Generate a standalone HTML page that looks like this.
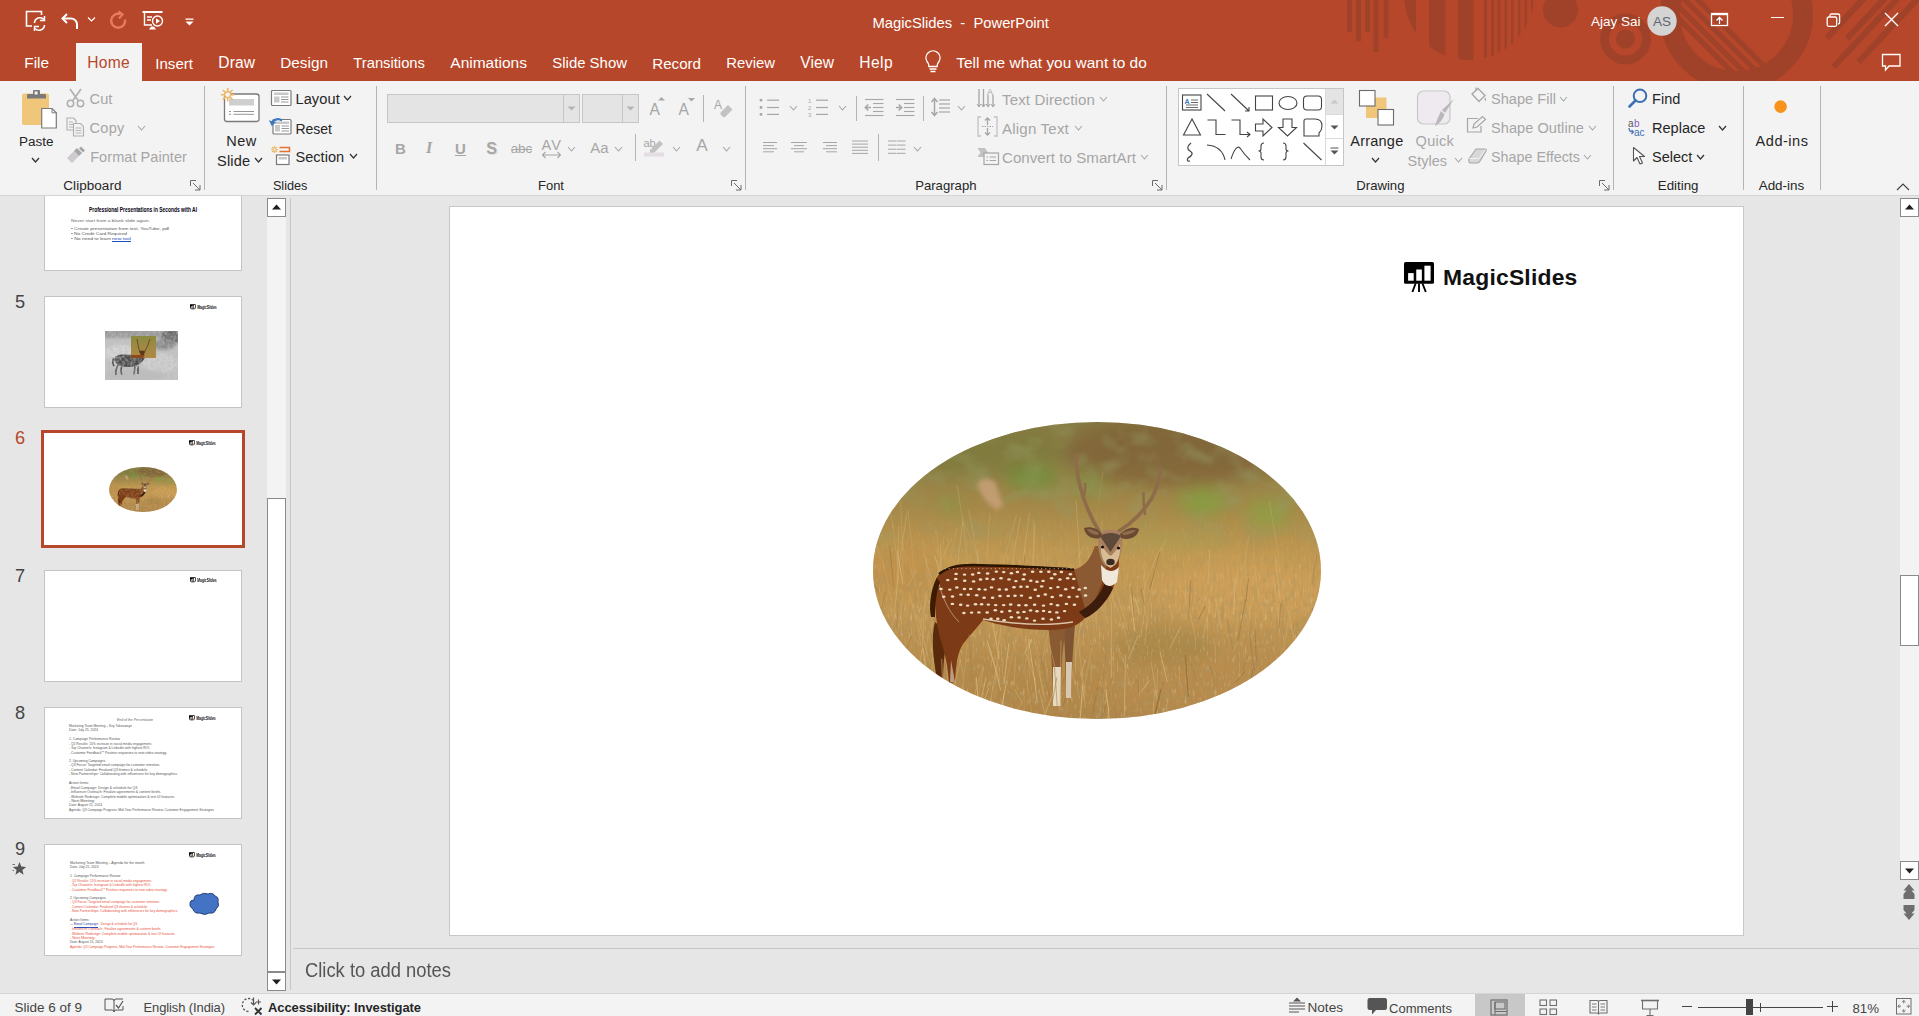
<!DOCTYPE html>
<html><head><meta charset="utf-8"><title>MagicSlides - PowerPoint</title>
<style>
html,body{margin:0;padding:0;width:1919px;height:1016px;overflow:hidden;background:#E6E6E6;font-family:"Liberation Sans",sans-serif;}
.a{position:absolute;}
.t{position:absolute;white-space:pre;}
svg.a{overflow:visible;}
</style></head><body>
<div class="a" style="left:0px;top:0px;width:1919px;height:81px;background:#B7472A"></div>
<div class="a" style="left:0px;top:81px;width:1919px;height:114px;background:#F3F3F3"></div>
<div class="a" style="left:0px;top:195px;width:1919px;height:1px;background:#D5D5D5"></div>
<div class="a" style="left:76px;top:43px;width:66px;height:38px;background:#F3F3F3"></div>
<div class="a" style="left:204px;top:86px;width:1px;height:104px;background:#B4B4B4"></div>
<div class="a" style="left:376px;top:86px;width:1px;height:104px;background:#B4B4B4"></div>
<div class="a" style="left:745px;top:86px;width:1px;height:104px;background:#B4B4B4"></div>
<div class="a" style="left:1166px;top:86px;width:1px;height:104px;background:#B4B4B4"></div>
<div class="a" style="left:1613px;top:86px;width:1px;height:104px;background:#B4B4B4"></div>
<div class="a" style="left:1743px;top:86px;width:1px;height:104px;background:#B4B4B4"></div>
<div class="a" style="left:1820px;top:86px;width:1px;height:104px;background:#B4B4B4"></div>
<svg class="a" style="left:20px;top:88px;" width="40" height="42" viewBox="0 0 40 42"><rect x="2" y="5.5" width="27" height="31.5" rx="2" fill="#EFC67A"/>
<path d="M7 10.5 V7 Q7 6 8 6 H13 V3 Q13 2 14 2 H19 Q20 2 20 3 V6 H25 Q26 6 26 7 V10.5 Z" fill="#7A7A7A"/>
<rect x="14.6" y="3.5" width="3" height="3" fill="#F3F3F3"/>
<path d="M21.7 20.5 H32 L36.3 24.8 V40 H21.7 Z" fill="#FFFFFF" stroke="#7A7A7A" stroke-width="1.2"/>
<path d="M32 20.5 V24.8 H36.3" fill="none" stroke="#7A7A7A" stroke-width="1"/></svg>
<div class="t" style="left:19px;top:135.00px;font-size:13.49px;line-height:13.49px;color:#262626;">Paste</div>
<svg class="a" style="left:31px;top:157px;" width="9" height="6" viewBox="0 0 9 6"><path d="M1 1 L4.5 5 L8 1" fill="none" stroke="#333" stroke-width="1.3"/></svg>
<svg class="a" style="left:66px;top:88px;" width="19" height="20" viewBox="0 0 19 20"><path d="M4 1 L12.5 13 M15 1 L6.5 13" stroke="#AFAFAF" stroke-width="1.6" fill="none"/><circle cx="4.5" cy="15.5" r="3.2" fill="none" stroke="#AFAFAF" stroke-width="1.5"/><circle cx="14.5" cy="15.5" r="3.2" fill="none" stroke="#AFAFAF" stroke-width="1.5"/></svg>
<div class="t" style="left:89.6px;top:92.00px;font-size:14.56px;line-height:14.56px;color:#A6A6A6;letter-spacing:0.08px;">Cut</div>
<svg class="a" style="left:66px;top:117px;" width="20" height="20" viewBox="0 0 20 20"><path d="M1 1 H7.5 L10 3.5 V13 H1 Z" fill="none" stroke="#AFAFAF" stroke-width="1.1"/><path d="M3 5 H7 M3 7.5 H8 M3 10 H8" stroke="#AFAFAF" stroke-width="0.9"/><path d="M7.5 6.5 H14.5 L17.5 9.5 V19 H7.5 Z" fill="#F3F3F3" stroke="#AFAFAF" stroke-width="1.1"/><path d="M9.5 11 H15.5 M9.5 13.5 H15.5 M9.5 16 H15.5" stroke="#AFAFAF" stroke-width="0.9"/></svg>
<div class="t" style="left:89.6px;top:121.00px;font-size:14.56px;line-height:14.56px;color:#A6A6A6;letter-spacing:0.23px;">Copy</div>
<svg class="a" style="left:137px;top:125px;" width="9" height="6" viewBox="0 0 9 6"><path d="M1 1 L4.5 5 L8 1" fill="none" stroke="#A6A6A6" stroke-width="1.1"/></svg>
<svg class="a" style="left:66px;top:147px;" width="20" height="17" viewBox="0 0 20 17"><path d="M1 11 L8 4 L13 9 L6 16 Z" fill="#CFCACF"/><path d="M8 4 L11 1 L16 6 L13 9 Z" fill="#A6A6A6"/><path d="M13 1.5 L15 -0.5 L19 3.5 L17 5.5 Z" fill="#A6A6A6"/></svg>
<div class="t" style="left:90.2px;top:150.00px;font-size:14.56px;line-height:14.56px;color:#A6A6A6;letter-spacing:0.04px;">Format Painter</div>
<div class="t" style="left:63.3px;top:179.00px;font-size:13.52px;line-height:13.52px;color:#262626;letter-spacing:0.04px;">Clipboard</div>
<svg class="a" style="left:190px;top:180px;" width="11" height="11" viewBox="0 0 11 11"><path d="M0.5 6 V0.5 H6" fill="none" stroke="#6b6b6b" stroke-width="1"/><path d="M3 3 L10 10 M10 5 V10 H5" fill="none" stroke="#6b6b6b" stroke-width="1"/></svg>
<svg class="a" style="left:218px;top:86px;" width="44" height="38" viewBox="0 0 44 38"><rect x="6.5" y="8" width="34.5" height="27.5" rx="2.5" fill="#FFFFFF" stroke="#7A7A7A" stroke-width="1.3"/>
<rect x="11" y="13" width="25" height="6.5" fill="#CFCFCF"/>
<path d="M11 25.5 H13 M15.5 25.5 H36 M11 28.3 H13 M15.5 28.3 H36" stroke="#8A8A8A" stroke-width="0.9"/>
<g stroke="#EDB867" stroke-width="1.6"><path d="M9.7 2 V15.6 M2.9 8.8 H16.5 M4.9 4 L14.5 13.6 M14.5 4 L4.9 13.6"/></g>
<circle cx="9.7" cy="8.8" r="3" fill="#F3F3F3" stroke="#EDB867" stroke-width="1.4"/></svg>
<div class="t" style="left:226.3px;top:134.00px;font-size:14.56px;line-height:14.56px;color:#262626;letter-spacing:0.46px;">New</div>
<div class="t" style="left:217.1px;top:154.00px;font-size:14.56px;line-height:14.56px;color:#262626;letter-spacing:0.16px;">Slide</div>
<svg class="a" style="left:254px;top:157px;" width="9" height="6" viewBox="0 0 9 6"><path d="M1 1 L4.5 5 L8 1" fill="none" stroke="#333" stroke-width="1.2"/></svg>
<svg class="a" style="left:270px;top:89px;" width="23" height="18" viewBox="0 0 23 18"><rect x="1.5" y="1.5" width="19.5" height="15" rx="1" fill="#FFFFFF" stroke="#7A7A7A" stroke-width="1.2"/><rect x="4" y="3.5" width="14.5" height="2.5" fill="#C8C8C8"/><rect x="4" y="7.5" width="5.5" height="6" fill="#C8C8C8"/><path d="M11 8 H18.5 M11 10.5 H18.5 M11 13 H18.5" stroke="#8A8A8A" stroke-width="0.9"/></svg>
<div class="t" style="left:295.4px;top:92.00px;font-size:14.56px;line-height:14.56px;color:#262626;letter-spacing:0.15px;">Layout</div>
<svg class="a" style="left:343px;top:95px;" width="9" height="6" viewBox="0 0 9 6"><path d="M1 1 L4.5 5 L8 1" fill="none" stroke="#333" stroke-width="1.2"/></svg>
<svg class="a" style="left:269px;top:117px;" width="24" height="19" viewBox="0 0 24 19"><rect x="4" y="2.5" width="18" height="14.5" rx="1" fill="#FFFFFF" stroke="#7A7A7A" stroke-width="1.2"/><rect x="6" y="4.5" width="14" height="2.5" fill="#C8C8C8"/><rect x="6" y="8" width="5" height="6.5" fill="#C8C8C8"/><path d="M12.5 9 H20 M12.5 11.5 H20 M12.5 14 H20" stroke="#8A8A8A" stroke-width="0.9"/><path d="M3 7 A6 5 0 0 1 13 3.5" fill="none" stroke="#3C78C0" stroke-width="2.2"/><path d="M0.5 3.5 L3 8.5 L6.5 5" fill="#3C78C0" stroke="#3C78C0" stroke-width="1"/></svg>
<div class="t" style="left:295.4px;top:122.00px;font-size:14.01px;line-height:14.01px;color:#262626;">Reset</div>
<svg class="a" style="left:270px;top:145px;" width="22" height="21" viewBox="0 0 22 21"><g stroke="#EDB867" stroke-width="1.2"><path d="M4.5 1 V8 M1 4.5 H8 M2 2 L7 7 M7 2 L2 7"/></g><circle cx="4.5" cy="4.5" r="1.6" fill="#F3F3F3" stroke="#EDB867" stroke-width="1"/><path d="M9.5 2.5 H19.5 V6.5 H9.5" fill="none" stroke="#E8712D" stroke-width="1.5"/><rect x="6.5" y="10" width="12.5" height="9.5" fill="#FFFFFF" stroke="#7A7A7A" stroke-width="1.2"/><rect x="8.5" y="12" width="8.5" height="2.5" fill="#C8C8C8"/></svg>
<div class="t" style="left:295.4px;top:150.00px;font-size:14.56px;line-height:14.56px;color:#262626;letter-spacing:0.05px;">Section</div>
<svg class="a" style="left:349px;top:153px;" width="9" height="6" viewBox="0 0 9 6"><path d="M1 1 L4.5 5 L8 1" fill="none" stroke="#333" stroke-width="1.2"/></svg>
<div class="t" style="left:272.9px;top:180.00px;font-size:12.7px;line-height:12.7px;color:#262626;">Slides</div>
<div class="a" style="left:387px;top:94px;width:193px;height:29px;background:#E4E4E4;border:1px solid #C6C6C6;box-sizing:border-box"></div>
<div class="a" style="left:563px;top:95px;width:1px;height:27px;background:#C6C6C6"></div>
<svg class="a" style="left:567px;top:106px;" width="9" height="5" viewBox="0 0 9 5"><path d="M0.5 0.5 H8.5 L4.5 4.5 Z" fill="#B4B4B4"/></svg>
<div class="a" style="left:582px;top:94px;width:57px;height:29px;background:#E4E4E4;border:1px solid #C6C6C6;box-sizing:border-box"></div>
<div class="a" style="left:622px;top:95px;width:1px;height:27px;background:#C6C6C6"></div>
<svg class="a" style="left:626px;top:106px;" width="9" height="5" viewBox="0 0 9 5"><path d="M0.5 0.5 H8.5 L4.5 4.5 Z" fill="#B4B4B4"/></svg>
<div class="t" style="left:649.5px;top:102.00px;font-size:15.6px;line-height:15.6px;color:#A6A6A6;letter-spacing:4.09px;">A</div>
<svg class="a" style="left:658px;top:97px;" width="7" height="4" viewBox="0 0 7 4"><path d="M0 3.5 L3.5 0 L7 3.5 Z" fill="#A6A6A6"/></svg>
<div class="t" style="left:678.5px;top:102.00px;font-size:15.6px;line-height:15.6px;color:#A6A6A6;letter-spacing:3.59px;">A</div>
<svg class="a" style="left:688px;top:98px;" width="7" height="4" viewBox="0 0 7 4"><path d="M0 0 L3.5 3.5 L7 0 Z" fill="#A6A6A6"/></svg>
<div class="a" style="left:703px;top:95px;width:1px;height:27px;background:#B4B4B4"></div>
<svg class="a" style="left:713px;top:97px;" width="21" height="22" viewBox="0 0 21 22"><text x="1" y="12" font-family="Liberation Sans" font-size="12" fill="#A6A6A6">A</text><path d="M8 15 L15 8 L19.5 12.5 L12.5 19.5 Q11 21 9.5 19.5 L8 18 Q6.5 16.5 8 15 Z" fill="#C2C2C2"/></svg>
<div class="t" style="left:395px;top:141.00px;font-size:15px;line-height:15px;color:#A6A6A6;font-weight:bold;">B</div>
<div class="t" style="left:426px;top:140.00px;font-size:16px;line-height:16px;color:#A6A6A6;font-weight:bold;font-family:'Liberation Serif';font-style:italic;">I</div>
<div class="t" style="left:455px;top:141.00px;font-size:15px;line-height:15px;color:#A6A6A6;font-weight:bold;">U</div>
<div class="a" style="left:455px;top:154.5px;width:11px;height:1.3px;background:#A6A6A6"></div>
<div class="t" style="left:487.4px;top:141.00px;font-size:16.12px;line-height:16.12px;color:#E0E0E0;letter-spacing:0.85px;font-weight:bold;">S</div>
<div class="t" style="left:486.2px;top:140.00px;font-size:16.12px;line-height:16.12px;color:#A6A6A6;letter-spacing:0.85px;font-weight:bold;">S</div>
<div class="t" style="left:510.8px;top:142.00px;font-size:13.44px;line-height:13.44px;color:#A6A6A6;letter-spacing:-0.16px;">abc</div>
<div class="a" style="left:511px;top:148.5px;width:20.5px;height:1.2px;background:#A6A6A6"></div>
<div class="t" style="left:541.5px;top:138.00px;font-size:14.56px;line-height:14.56px;color:#A6A6A6;letter-spacing:1.08px;">AV</div>
<svg class="a" style="left:541px;top:151px;" width="21" height="8" viewBox="0 0 21 8"><path d="M1.5 4 H19.5 M4.5 1 L1.5 4 L4.5 7 M16.5 1 L19.5 4 L16.5 7" fill="none" stroke="#A6A6A6" stroke-width="1.1"/></svg>
<svg class="a" style="left:567px;top:146px;" width="9" height="6" viewBox="0 0 9 6"><path d="M1 1 L4.5 5 L8 1" fill="none" stroke="#A6A6A6" stroke-width="1.1"/></svg>
<div class="t" style="left:590.3px;top:141.00px;font-size:14.88px;line-height:14.88px;color:#A6A6A6;">Aa</div>
<svg class="a" style="left:614px;top:146px;" width="9" height="6" viewBox="0 0 9 6"><path d="M1 1 L4.5 5 L8 1" fill="none" stroke="#A6A6A6" stroke-width="1.1"/></svg>
<div class="a" style="left:635px;top:134px;width:1px;height:27px;background:#B4B4B4"></div>
<svg class="a" style="left:643px;top:137px;" width="23" height="21" viewBox="0 0 23 21"><text x="0.5" y="10" font-family="Liberation Sans" font-size="11" fill="#A6A6A6">ab</text><path d="M7 13 L16.5 3.5 L20 7 L10.5 16.5 L6.5 17 Z" fill="#C2C2C2"/><rect x="1" y="15.5" width="20" height="4" fill="#E4DDE4"/></svg>
<svg class="a" style="left:672px;top:146px;" width="9" height="6" viewBox="0 0 9 6"><path d="M1 1 L4.5 5 L8 1" fill="none" stroke="#A6A6A6" stroke-width="1.1"/></svg>
<div class="t" style="left:696.2px;top:137.00px;font-size:17.16px;line-height:17.16px;color:#A6A6A6;letter-spacing:2.35px;">A</div>
<svg class="a" style="left:722px;top:146px;" width="9" height="6" viewBox="0 0 9 6"><path d="M1 1 L4.5 5 L8 1" fill="none" stroke="#A6A6A6" stroke-width="1.1"/></svg>
<div class="t" style="left:538px;top:179.00px;font-size:12.99px;line-height:12.99px;color:#262626;">Font</div>
<svg class="a" style="left:731px;top:180px;" width="11" height="11" viewBox="0 0 11 11"><path d="M0.5 6 V0.5 H6" fill="none" stroke="#6b6b6b" stroke-width="1"/><path d="M3 3 L10 10 M10 5 V10 H5" fill="none" stroke="#6b6b6b" stroke-width="1"/></svg>
<svg class="a" style="left:758px;top:97px;" width="24" height="21" viewBox="0 0 24 21"><circle cx="3" cy="3.2" r="1.4" fill="#A6A6A6"/><circle cx="3" cy="10.5" r="1.4" fill="#A6A6A6"/><circle cx="3" cy="17.4" r="1.4" fill="#A6A6A6"/><path d="M9 3.2 H21" stroke="#A6A6A6" stroke-width="1.2"/><path d="M9 10.5 H21" stroke="#A6A6A6" stroke-width="1.2"/><path d="M9 17.4 H21" stroke="#A6A6A6" stroke-width="1.2"/></svg>
<svg class="a" style="left:789px;top:105px;" width="9" height="6" viewBox="0 0 9 6"><path d="M1 1 L4.5 5 L8 1" fill="none" stroke="#A6A6A6" stroke-width="1.1"/></svg>
<svg class="a" style="left:808px;top:97px;" width="24" height="21" viewBox="0 0 24 21"><text x="0" y="6" font-family="Liberation Sans" font-size="6" fill="#A6A6A6">1</text><text x="0" y="13" font-family="Liberation Sans" font-size="6" fill="#A6A6A6">2</text><text x="0" y="20" font-family="Liberation Sans" font-size="6" fill="#A6A6A6">3</text><path d="M8 3.2 H20" stroke="#A6A6A6" stroke-width="1.2"/><path d="M8 10.5 H20" stroke="#A6A6A6" stroke-width="1.2"/><path d="M8 17.4 H20" stroke="#A6A6A6" stroke-width="1.2"/></svg>
<svg class="a" style="left:838px;top:105px;" width="9" height="6" viewBox="0 0 9 6"><path d="M1 1 L4.5 5 L8 1" fill="none" stroke="#A6A6A6" stroke-width="1.1"/></svg>
<div class="a" style="left:856px;top:96px;width:1px;height:25px;background:#B4B4B4"></div>
<svg class="a" style="left:864px;top:98px;" width="22" height="19" viewBox="0 0 22 19"><path d="M1 1.5 H19.5" stroke="#A6A6A6" stroke-width="1.1"/><path d="M1 17.5 H19.5" stroke="#A6A6A6" stroke-width="1.1"/><path d="M9 5.5 H19.5" stroke="#A6A6A6" stroke-width="1.1"/><path d="M9 9.5 H19.5" stroke="#A6A6A6" stroke-width="1.1"/><path d="M9 13.5 H19.5" stroke="#A6A6A6" stroke-width="1.1"/><path d="M7 9.5 H1.5 M4.3 6.5 L1.3 9.5 L4.3 12.5" fill="none" stroke="#A6A6A6" stroke-width="1.5"/></svg>
<svg class="a" style="left:895px;top:98px;" width="22" height="19" viewBox="0 0 22 19"><path d="M1 1.5 H19.5" stroke="#A6A6A6" stroke-width="1.1"/><path d="M1 17.5 H19.5" stroke="#A6A6A6" stroke-width="1.1"/><path d="M9 5.5 H19.5" stroke="#A6A6A6" stroke-width="1.1"/><path d="M9 9.5 H19.5" stroke="#A6A6A6" stroke-width="1.1"/><path d="M9 13.5 H19.5" stroke="#A6A6A6" stroke-width="1.1"/><path d="M1 9.5 H6.5 M3.7 6.5 L6.7 9.5 L3.7 12.5" fill="none" stroke="#A6A6A6" stroke-width="1.5"/></svg>
<div class="a" style="left:923px;top:96px;width:1px;height:25px;background:#B4B4B4"></div>
<svg class="a" style="left:931px;top:97px;" width="21" height="21" viewBox="0 0 21 21"><path d="M8 3 H19" stroke="#A6A6A6" stroke-width="1.2"/><path d="M8 7 H19" stroke="#A6A6A6" stroke-width="1.2"/><path d="M8 11 H19" stroke="#A6A6A6" stroke-width="1.2"/><path d="M8 15 H19" stroke="#A6A6A6" stroke-width="1.2"/><path d="M3.5 2 V18 M0.5 5 L3.5 1.5 L6.5 5 M0.5 15 L3.5 18.5 L6.5 15" fill="none" stroke="#A6A6A6" stroke-width="1.5"/></svg>
<svg class="a" style="left:957px;top:105px;" width="9" height="6" viewBox="0 0 9 6"><path d="M1 1 L4.5 5 L8 1" fill="none" stroke="#A6A6A6" stroke-width="1.1"/></svg>
<svg class="a" style="left:762px;top:141px;" width="17" height="14" viewBox="0 0 17 14"><path d="M1 1.5 H15" stroke="#A6A6A6" stroke-width="1"/><path d="M1 7.7 H15" stroke="#A6A6A6" stroke-width="1"/><path d="M1 4.6 H12" stroke="#A6A6A6" stroke-width="1"/><path d="M1 10.8 H12" stroke="#A6A6A6" stroke-width="1"/></svg>
<svg class="a" style="left:790px;top:141px;" width="18" height="14" viewBox="0 0 18 14"><path d="M1 1.5 H17" stroke="#A6A6A6" stroke-width="1"/><path d="M1 7.7 H17" stroke="#A6A6A6" stroke-width="1"/><path d="M4 4.6 H14" stroke="#A6A6A6" stroke-width="1"/><path d="M4 10.8 H14" stroke="#A6A6A6" stroke-width="1"/></svg>
<svg class="a" style="left:822px;top:141px;" width="17" height="14" viewBox="0 0 17 14"><path d="M1 1.5 H15" stroke="#A6A6A6" stroke-width="1"/><path d="M1 7.7 H15" stroke="#A6A6A6" stroke-width="1"/><path d="M4 4.6 H15" stroke="#A6A6A6" stroke-width="1"/><path d="M4 10.8 H15" stroke="#A6A6A6" stroke-width="1"/></svg>
<svg class="a" style="left:851px;top:140px;" width="19" height="14" viewBox="0 0 19 14"><path d="M1 1 H17" stroke="#A6A6A6" stroke-width="1"/><path d="M1 4.1 H17" stroke="#A6A6A6" stroke-width="1"/><path d="M1 7.2 H17" stroke="#A6A6A6" stroke-width="1"/><path d="M1 10.3 H17" stroke="#A6A6A6" stroke-width="1"/><path d="M1 13.4 H17" stroke="#A6A6A6" stroke-width="1"/></svg>
<div class="a" style="left:878px;top:134px;width:1px;height:27px;background:#B4B4B4"></div>
<svg class="a" style="left:887px;top:140px;" width="19" height="14" viewBox="0 0 19 14"><path d="M1 1 H9.5" stroke="#A6A6A6" stroke-width="1"/><path d="M1 5.1 H9.5" stroke="#A6A6A6" stroke-width="1"/><path d="M1 9.2 H9.5" stroke="#A6A6A6" stroke-width="1"/><path d="M1 13.3 H9.5" stroke="#A6A6A6" stroke-width="1"/><path d="M10 1 H18.5" stroke="#A6A6A6" stroke-width="1"/><path d="M10 5.1 H18.5" stroke="#A6A6A6" stroke-width="1"/><path d="M10 9.2 H18.5" stroke="#A6A6A6" stroke-width="1"/><path d="M10 13.3 H18.5" stroke="#A6A6A6" stroke-width="1"/></svg>
<svg class="a" style="left:913px;top:146px;" width="9" height="6" viewBox="0 0 9 6"><path d="M1 1 L4.5 5 L8 1" fill="none" stroke="#A6A6A6" stroke-width="1.1"/></svg>
<svg class="a" style="left:977px;top:87px;" width="22" height="22" viewBox="0 0 22 22"><path d="M2 2 V20 M6.5 2 V20 M11 8 V20 M16 8 V20" stroke="#A6A6A6" stroke-width="1.3"/><path d="M0 17 L2 20 L4 17 M4.5 17 L6.5 20 L8.5 17 M9 17 L11 20 L13 17 M14 17 L16 20 L18 17" fill="none" stroke="#A6A6A6" stroke-width="1"/><text x="10" y="8" font-family="Liberation Sans" font-size="9" fill="#A6A6A6">A</text></svg>
<div class="t" style="left:1002px;top:92.00px;font-size:15.08px;line-height:15.08px;color:#A6A6A6;letter-spacing:0.12px;">Text Direction</div>
<svg class="a" style="left:1099px;top:96px;" width="9" height="6" viewBox="0 0 9 6"><path d="M1 1 L4.5 5 L8 1" fill="none" stroke="#A6A6A6" stroke-width="1.1"/></svg>
<svg class="a" style="left:977px;top:116px;" width="22" height="21" viewBox="0 0 22 21"><path d="M4 1 H1 V20 H4 M17 1 H20 V20 H17" fill="none" stroke="#C8C0C8" stroke-width="1.3"/><path d="M5 10.5 H16" stroke="#A6A6A6" stroke-width="1" stroke-dasharray="1.5 1"/><path d="M10.5 9 V2 M8 4.5 L10.5 2 L13 4.5 M10.5 12 V19 M8 16.5 L10.5 19 L13 16.5" fill="none" stroke="#A6A6A6" stroke-width="1.3"/></svg>
<div class="t" style="left:1002px;top:121.00px;font-size:15.08px;line-height:15.08px;color:#A6A6A6;letter-spacing:0.19px;">Align Text</div>
<svg class="a" style="left:1074px;top:125px;" width="9" height="6" viewBox="0 0 9 6"><path d="M1 1 L4.5 5 L8 1" fill="none" stroke="#A6A6A6" stroke-width="1.1"/></svg>
<svg class="a" style="left:977px;top:147px;" width="23" height="19" viewBox="0 0 23 19"><path d="M0.5 1 H8 L11 5.5 L8 10 H0.5 L3.5 5.5 Z" fill="#C2C2C2"/><rect x="7" y="6" width="14.5" height="11.5" fill="#F3F3F3" stroke="#A6A6A6" stroke-width="1.2"/><path d="M9.5 10 H11 M12.5 10 H19 M9.5 13.5 H11 M12.5 13.5 H19" stroke="#A6A6A6" stroke-width="1"/></svg>
<div class="t" style="left:1002px;top:150.00px;font-size:15.08px;line-height:15.08px;color:#A6A6A6;letter-spacing:0.04px;">Convert to SmartArt</div>
<svg class="a" style="left:1140px;top:154px;" width="9" height="6" viewBox="0 0 9 6"><path d="M1 1 L4.5 5 L8 1" fill="none" stroke="#A6A6A6" stroke-width="1.1"/></svg>
<div class="t" style="left:915.2px;top:179.00px;font-size:13.13px;line-height:13.13px;color:#262626;">Paragraph</div>
<svg class="a" style="left:1152px;top:180px;" width="11" height="11" viewBox="0 0 11 11"><path d="M0.5 6 V0.5 H6" fill="none" stroke="#6b6b6b" stroke-width="1"/><path d="M3 3 L10 10 M10 5 V10 H5" fill="none" stroke="#6b6b6b" stroke-width="1"/></svg>
<div class="a" style="left:1178px;top:88px;width:166px;height:78px;background:#FFFFFF;border:1px solid #C6C6C6;box-sizing:border-box"></div>
<div class="a" style="left:1325px;top:89px;width:1px;height:76px;background:#DADADA"></div>
<div class="a" style="left:1326px;top:89px;width:17px;height:25px;background:#E4E4E4"></div>
<div class="a" style="left:1326px;top:114px;width:17px;height:1px;background:#DADADA"></div>
<div class="a" style="left:1326px;top:138px;width:17px;height:1px;background:#DADADA"></div>
<svg class="a" style="left:1330px;top:99px;" width="9" height="5" viewBox="0 0 9 5"><path d="M0.5 4.5 H8.5 L4.5 0.5 Z" fill="#C8C8C8"/></svg>
<svg class="a" style="left:1330px;top:125px;" width="9" height="5" viewBox="0 0 9 5"><path d="M0.5 0.5 H8.5 L4.5 4.5 Z" fill="#555"/></svg>
<svg class="a" style="left:1330px;top:147px;" width="9" height="9" viewBox="0 0 9 9"><path d="M0.5 1 H8.5" stroke="#555" stroke-width="1"/><path d="M0.5 3.5 H8.5 L4.5 7.5 Z" fill="#555"/></svg>
<svg class="a" style="left:1178px;top:88px;" width="166" height="78" viewBox="0 0 166 78"><g fill="none" stroke="#444" stroke-width="1.1">
<rect x="4.5" y="7" width="18.5" height="15"/>
<path d="M8 17 H20 M8 19.5 H20 M13 12 H20 M13 14.5 H20" stroke-width="0.8"/>
<path d="M29 6 L47 23"/>
<path d="M53 6 L71 23 M67 23 H71 V19"/>
<rect x="77.5" y="8" width="17" height="14"/>
<ellipse cx="110" cy="15" rx="9" ry="6.5"/>
<rect x="125.5" y="8" width="18" height="14" rx="3.5"/>
<path d="M14 31 L5.5 47 H22.5 Z"/>
<path d="M29.5 32 H38 V46.5 H47.5"/>
<path d="M53.5 32 H62 V46.5 H72 M69 44 L72 46.5 L69 49"/>
<path d="M77.5 36 H85 V31 L94 39.5 L85 48 V43 H77.5 Z"/>
<path d="M105 31 H114 V39.5 H118.5 L109.5 48 L100.5 39.5 H105 Z"/>
<path d="M126 33 Q126 31 128 31 H137 Q144 31 144 38 Q144 42 141 45 V48 H126 Z"/>
<path d="M13 55 Q7 60 12 63 Q17 66 10 70 Q8 74 12 73" stroke-width="1.2"/>
<path d="M29 57 Q44 58 47 72"/>
<path d="M53 71 Q58 56 62 60 Q66 66 72 72"/>
<path d="M86 55 Q83 55 83 58 V61 Q83 63 80.5 63 Q83 63 83 65 V69 Q83 72 86 72"/>
<path d="M105 55 Q108 55 108 58 V61 Q108 63 110.5 63 Q108 63 108 65 V69 Q108 72 105 72"/>
<path d="M125.5 55 L143.5 72"/>
</g><text x="6.5" y="15.5" font-family="Liberation Sans" font-size="7" font-weight="bold" fill="#3C78C0">A</text></svg>
<svg class="a" style="left:1357px;top:88px;" width="40" height="40" viewBox="0 0 40 40"><rect x="9" y="9.5" width="20.5" height="20.5" fill="#EFC67A"/><rect x="2.5" y="2.5" width="15.5" height="15.5" fill="#FFFFFF" stroke="#6b6b6b" stroke-width="1.1"/><rect x="21" y="21.5" width="15.5" height="15.5" fill="#FFFFFF" stroke="#6b6b6b" stroke-width="1.1"/></svg>
<div class="t" style="left:1350.3px;top:134.00px;font-size:14.56px;line-height:14.56px;color:#262626;letter-spacing:0.20px;">Arrange</div>
<svg class="a" style="left:1371px;top:157px;" width="9" height="6" viewBox="0 0 9 6"><path d="M1 1 L4.5 5 L8 1" fill="none" stroke="#333" stroke-width="1.2"/></svg>
<svg class="a" style="left:1415px;top:89px;" width="42" height="40" viewBox="0 0 42 40"><rect x="2.5" y="2" width="32.5" height="33" rx="6" fill="#EEEAF0" stroke="#C8C8C8" stroke-width="1.2"/><path d="M39 10 L30 24 L27 21 Z" fill="#B8B8B8"/><path d="M26 22 L29.5 25.5 Q27 33 20 37 Q22 30 26 22 Z" fill="#B8B8B8"/></svg>
<div class="t" style="left:1415.6px;top:134.00px;font-size:14.56px;line-height:14.56px;color:#A6A6A6;letter-spacing:0.24px;">Quick</div>
<div class="t" style="left:1407.6px;top:154.00px;font-size:14.47px;line-height:14.47px;color:#A6A6A6;">Styles</div>
<svg class="a" style="left:1454px;top:157px;" width="9" height="6" viewBox="0 0 9 6"><path d="M1 1 L4.5 5 L8 1" fill="none" stroke="#A6A6A6" stroke-width="1.1"/></svg>
<svg class="a" style="left:1468px;top:87px;" width="20" height="18" viewBox="0 0 20 18"><path d="M4 7 L10 1.5 L17 8.5 L11 14.5 Z" fill="none" stroke="#A6A6A6" stroke-width="1.3"/><path d="M8 3.5 V0.5" stroke="#A6A6A6" stroke-width="1.2"/><path d="M17 10 Q19 13 17.5 14 Q16 13 17 10 Z" fill="#A6A6A6"/></svg>
<div class="t" style="left:1491px;top:92.00px;font-size:14.56px;line-height:14.56px;color:#A6A6A6;letter-spacing:0.03px;">Shape Fill</div>
<svg class="a" style="left:1559px;top:96px;" width="9" height="6" viewBox="0 0 9 6"><path d="M1 1 L4.5 5 L8 1" fill="none" stroke="#A6A6A6" stroke-width="1.1"/></svg>
<svg class="a" style="left:1466px;top:116px;" width="22" height="18" viewBox="0 0 22 18"><path d="M12 2.5 H1.5 V16 H15 V10" fill="none" stroke="#A6A6A6" stroke-width="1.2"/><path d="M7 12 L8 8 L16.5 0.5 L19.5 3.5 L11 11 Z" fill="none" stroke="#A6A6A6" stroke-width="1.2"/></svg>
<div class="t" style="left:1491px;top:121.00px;font-size:14.56px;line-height:14.56px;color:#A6A6A6;letter-spacing:0.06px;">Shape Outline</div>
<svg class="a" style="left:1588px;top:125px;" width="9" height="6" viewBox="0 0 9 6"><path d="M1 1 L4.5 5 L8 1" fill="none" stroke="#A6A6A6" stroke-width="1.1"/></svg>
<svg class="a" style="left:1467px;top:147px;" width="21" height="18" viewBox="0 0 21 18"><path d="M2 12 L9 2 H18 Q20 2 19 4 L13 14 Q12 16 10 16 H4 Q1 16 2 12 Z" fill="#D8D8D8" stroke="#A6A6A6" stroke-width="1.1"/><path d="M2.5 11.5 H12 L18.5 2.5" fill="none" stroke="#F3F3F3" stroke-width="1"/></svg>
<div class="t" style="left:1491px;top:150.00px;font-size:14.34px;line-height:14.34px;color:#A6A6A6;">Shape Effects</div>
<svg class="a" style="left:1583px;top:154px;" width="9" height="6" viewBox="0 0 9 6"><path d="M1 1 L4.5 5 L8 1" fill="none" stroke="#A6A6A6" stroke-width="1.1"/></svg>
<div class="t" style="left:1356.3px;top:179.00px;font-size:13.14px;line-height:13.14px;color:#262626;">Drawing</div>
<svg class="a" style="left:1599px;top:180px;" width="11" height="11" viewBox="0 0 11 11"><path d="M0.5 6 V0.5 H6" fill="none" stroke="#6b6b6b" stroke-width="1"/><path d="M3 3 L10 10 M10 5 V10 H5" fill="none" stroke="#6b6b6b" stroke-width="1"/></svg>
<svg class="a" style="left:1627px;top:87px;" width="22" height="21" viewBox="0 0 22 21"><circle cx="13" cy="8.8" r="6.3" fill="none" stroke="#3C6EB4" stroke-width="2"/><path d="M8.5 13.5 L2.5 19.5" stroke="#3C6EB4" stroke-width="2.6" stroke-linecap="round"/></svg>
<div class="t" style="left:1652px;top:92.00px;font-size:14.56px;line-height:14.56px;color:#262626;letter-spacing:0.04px;">Find</div>
<svg class="a" style="left:1627px;top:118px;" width="24" height="20" viewBox="0 0 24 20"><text x="1" y="8.5" font-family="Liberation Sans" font-size="10" fill="#555">a</text><text x="7" y="8.5" font-family="Liberation Sans" font-size="10" fill="#8A5CB5">b</text><text x="7" y="18" font-family="Liberation Sans" font-size="10" fill="#3C6EB4">ac</text><path d="M2 10 Q2 14 6 14" fill="none" stroke="#3C6EB4" stroke-width="1.2"/><path d="M4.5 12 L6.5 14 L4.5 16" fill="none" stroke="#3C6EB4" stroke-width="1.1"/></svg>
<div class="t" style="left:1652px;top:121.00px;font-size:14.56px;line-height:14.56px;color:#262626;letter-spacing:0.01px;">Replace</div>
<svg class="a" style="left:1718px;top:125px;" width="9" height="6" viewBox="0 0 9 6"><path d="M1 1 L4.5 5 L8 1" fill="none" stroke="#333" stroke-width="1.2"/></svg>
<svg class="a" style="left:1632px;top:146px;" width="14" height="20" viewBox="0 0 14 20"><path d="M1.5 1.5 V15 L5 11.5 L8 18 L10.5 17 L7.5 10.5 H12.5 Z" fill="#FFFFFF" stroke="#555" stroke-width="1.1" stroke-linejoin="round"/></svg>
<div class="t" style="left:1652px;top:150.00px;font-size:14.5px;line-height:14.5px;color:#262626;">Select</div>
<svg class="a" style="left:1696px;top:154px;" width="9" height="6" viewBox="0 0 9 6"><path d="M1 1 L4.5 5 L8 1" fill="none" stroke="#333" stroke-width="1.2"/></svg>
<div class="t" style="left:1657.8px;top:179.00px;font-size:13.31px;line-height:13.31px;color:#262626;">Editing</div>
<svg class="a" style="left:1770px;top:96px;" width="22" height="22" viewBox="0 0 22 22"><defs><filter id="bl" x="-50%" y="-50%" width="200%" height="200%"><feGaussianBlur stdDeviation="0.7"/></filter></defs><circle cx="10.6" cy="10.6" r="6.3" fill="#F7931E" filter="url(#bl)"/></svg>
<div class="t" style="left:1755.6px;top:134.00px;font-size:14.56px;line-height:14.56px;color:#262626;letter-spacing:0.50px;">Add-ins</div>
<div class="t" style="left:1758.7px;top:179.00px;font-size:13.45px;line-height:13.45px;color:#262626;">Add-ins</div>
<svg class="a" style="left:1896px;top:183px;" width="14" height="8" viewBox="0 0 14 8"><path d="M1 7 L7 1 L13 7" fill="none" stroke="#444" stroke-width="1.2"/></svg>
<div class="a" style="left:0px;top:196px;width:1919px;height:797px;background:#E6E6E6"></div>
<div class="a" style="left:267px;top:198px;width:19px;height:793px;background:#F3F3F3"></div>
<div class="a" style="left:290px;top:198px;width:1px;height:792px;background:#C6C6C6"></div>
<div class="a" style="left:449px;top:206px;width:1295px;height:730px;background:#C8C8C8"></div>
<div class="a" style="left:450px;top:207px;width:1293px;height:728px;background:#FFFFFF"></div>
<svg class="a" style="left:0;top:0" width="0" height="0"><defs>
<linearGradient id="dbg" x1="0" y1="0" x2="0" y2="1">
<stop offset="0" stop-color="#867A42"/><stop offset="0.12" stop-color="#8C7E46"/>
<stop offset="0.3" stop-color="#A88A4A"/><stop offset="0.45" stop-color="#C49A52"/>
<stop offset="0.62" stop-color="#C49A56"/><stop offset="0.8" stop-color="#BA8E4E"/><stop offset="1" stop-color="#B0864A"/>
</linearGradient>
<filter id="dblur" x="-30%" y="-30%" width="160%" height="160%"><feGaussianBlur stdDeviation="8"/></filter>
<filter id="dblur2" x="-50%" y="-50%" width="200%" height="200%"><feGaussianBlur stdDeviation="2.2"/></filter>
<filter id="dsoft" x="-5%" y="-5%" width="110%" height="110%"><feGaussianBlur stdDeviation="0.45"/></filter>
<filter id="dgrain" x="0" y="0" width="100%" height="100%"><feTurbulence type="fractalNoise" baseFrequency="0.35 0.06" numOctaves="3" seed="9"/><feColorMatrix type="matrix" values="0 0 0 0 0.35  0 0 0 0 0.25  0 0 0 0 0.1  0 0 0 -2.2 1.25"/></filter>
<filter id="dgrain2" x="0" y="0" width="100%" height="100%"><feTurbulence type="fractalNoise" baseFrequency="0.5 0.12" numOctaves="2" seed="21"/><feColorMatrix type="matrix" values="0 0 0 0 0.95  0 0 0 0 0.85  0 0 0 0 0.6  0 0 0 2.6 -1.55"/></filter>
<linearGradient id="dmg" x1="0" y1="0" x2="0" y2="1"><stop offset="0.25" stop-color="#000"/><stop offset="0.65" stop-color="#fff"/></linearGradient><mask id="dmask"><rect x="0" y="0" width="448" height="297" fill="url(#dmg)"/></mask>
<filter id="dblotch" x="0" y="0" width="100%" height="100%"><feTurbulence type="fractalNoise" baseFrequency="0.035 0.05" numOctaves="3" seed="3"/><feColorMatrix type="matrix" values="0 0 0 0 0.30  0 0 0 0 0.32  0 0 0 0 0.12  0 0 0 -3.2 1.75"/><feGaussianBlur stdDeviation="1.5"/></filter>
<linearGradient id="dmg2" x1="0" y1="0" x2="0" y2="1"><stop offset="0" stop-color="#fff"/><stop offset="0.3" stop-color="#fff"/><stop offset="0.5" stop-color="#000"/></linearGradient><mask id="dmask2"><rect x="0" y="0" width="448" height="297" fill="url(#dmg2)"/></mask>
<filter id="dclump" x="0" y="0" width="100%" height="100%"><feTurbulence type="fractalNoise" baseFrequency="0.09 0.14" numOctaves="3" seed="17"/><feColorMatrix type="matrix" values="0 0 0 0 0.42  0 0 0 0 0.30  0 0 0 0 0.12  0 0 0 -3 1.45"/></filter>
<clipPath id="dclip"><ellipse cx="224" cy="148.5" rx="224" ry="148.5"/></clipPath>
</defs>
<symbol id="deer" viewBox="0 0 448 297">
<g clip-path="url(#dclip)">
<rect x="0" y="0" width="448" height="297" fill="url(#dbg)"/>
<g filter="url(#dblur)">
<ellipse cx="100" cy="28" rx="90" ry="26" fill="#7E7A3C" opacity="0.7"/>
<ellipse cx="300" cy="30" rx="110" ry="34" fill="#7E5C36" opacity="0.65"/>
<ellipse cx="160" cy="56" rx="26" ry="12" fill="#6E9038" opacity="0.85"/>
<ellipse cx="78" cy="84" rx="10" ry="9" fill="#7A9A40" opacity="0.6"/>
<ellipse cx="215" cy="62" rx="16" ry="12" fill="#7A9440" opacity="0.6"/>
<ellipse cx="330" cy="80" rx="24" ry="13" fill="#82A040" opacity="0.85"/>
<ellipse cx="395" cy="92" rx="22" ry="15" fill="#88A444" opacity="0.7"/>
<ellipse cx="300" cy="118" rx="60" ry="10" fill="#A0A452" opacity="0.35"/>
<ellipse cx="30" cy="150" rx="40" ry="30" fill="#C09048" opacity="0.6"/>
<ellipse cx="370" cy="170" rx="90" ry="30" fill="#D4A45A" opacity="0.6"/>
<ellipse cx="290" cy="225" rx="50" ry="22" fill="#9A8040" opacity="0.45"/>
<ellipse cx="120" cy="262" rx="110" ry="28" fill="#B48848" opacity="0.5"/>
<ellipse cx="340" cy="268" rx="110" ry="30" fill="#BC8E50" opacity="0.45"/>
</g>
<rect x="0" y="0" width="448" height="297" filter="url(#dblotch)" opacity="0.45" mask="url(#dmask2)"/>
<rect x="0" y="0" width="448" height="297" filter="url(#dgrain)" opacity="0.45" mask="url(#dmask)"/>
<rect x="0" y="0" width="448" height="297" filter="url(#dclump)" opacity="0.5" mask="url(#dmask)"/>
<rect x="0" y="0" width="448" height="297" filter="url(#dgrain2)" opacity="0.4" mask="url(#dmask)"/>
<g filter="url(#dblur2)"><path d="M104 62 Q112 52 122 60 L130 84 L124 88 Q110 80 104 62 Z" fill="#C8A078" opacity="0.85"/></g>
<path d="M317.9 214.9 Q318.6 184.6 320.1 154.2" stroke="#B8925A" stroke-width="0.8" fill="none" opacity="0.55"/><path d="M269.4 173.5 Q276.5 145.4 293.0 117.3" stroke="#D6B476" stroke-width="0.8" fill="none" opacity="0.55"/><path d="M256.2 228.6 Q251.0 201.4 238.8 174.2" stroke="#D6B476" stroke-width="0.8" fill="none" opacity="0.55"/><path d="M271.7 222.6 Q275.0 182.4 282.8 142.3" stroke="#D6B476" stroke-width="0.8" fill="none" opacity="0.55"/><path d="M41.2 231.7 Q41.8 188.9 43.4 146.1" stroke="#B8925A" stroke-width="0.8" fill="none" opacity="0.55"/><path d="M112.3 163.2 Q105.5 130.7 89.4 98.3" stroke="#CCA86A" stroke-width="0.8" fill="none" opacity="0.55"/><path d="M362.4 216.5 Q366.4 165.2 375.7 114.0" stroke="#CCA86A" stroke-width="0.8" fill="none" opacity="0.55"/><path d="M48.0 223.9 Q44.4 197.0 35.8 170.1" stroke="#D6B476" stroke-width="0.8" fill="none" opacity="0.55"/><path d="M223.7 209.3 Q223.0 165.5 221.4 121.6" stroke="#CCA86A" stroke-width="0.8" fill="none" opacity="0.55"/><path d="M186.6 182.8 Q193.6 154.1 210.1 125.5" stroke="#D6B476" stroke-width="0.8" fill="none" opacity="0.55"/><path d="M65.2 218.0 Q59.7 174.0 46.9 129.9" stroke="#B8925A" stroke-width="0.8" fill="none" opacity="0.55"/><path d="M205.8 217.0 Q201.9 195.5 192.8 173.9" stroke="#B8925A" stroke-width="0.8" fill="none" opacity="0.55"/><path d="M70.9 185.4 Q69.7 153.4 67.1 121.5" stroke="#D6B476" stroke-width="0.8" fill="none" opacity="0.55"/><path d="M427.8 211.2 Q434.9 162.5 451.6 113.8" stroke="#B8925A" stroke-width="0.8" fill="none" opacity="0.55"/><path d="M108.8 172.8 Q105.0 130.7 95.9 88.6" stroke="#CCA86A" stroke-width="0.8" fill="none" opacity="0.55"/><path d="M47.0 170.5 Q53.7 138.1 69.3 105.7" stroke="#B8925A" stroke-width="0.8" fill="none" opacity="0.55"/><path d="M103.9 164.4 Q111.3 121.0 128.6 77.6" stroke="#B8925A" stroke-width="0.8" fill="none" opacity="0.55"/><path d="M157.6 212.5 Q158.9 157.9 162.1 103.4" stroke="#D6B476" stroke-width="0.8" fill="none" opacity="0.55"/><path d="M208.9 185.4 Q207.1 131.6 203.0 77.9" stroke="#D6B476" stroke-width="0.8" fill="none" opacity="0.55"/><path d="M102.6 181.3 Q103.4 153.9 105.1 126.6" stroke="#D6B476" stroke-width="0.8" fill="none" opacity="0.55"/><path d="M216.5 186.0 Q220.4 142.3 229.5 98.5" stroke="#CCA86A" stroke-width="0.8" fill="none" opacity="0.55"/><path d="M202.3 239.4 Q207.7 192.2 220.4 145.1" stroke="#D6B476" stroke-width="0.8" fill="none" opacity="0.55"/><path d="M242.3 187.7 Q239.0 165.8 231.2 144.0" stroke="#CCA86A" stroke-width="0.8" fill="none" opacity="0.55"/><path d="M277.0 196.7 Q277.2 147.0 277.6 97.4" stroke="#B8925A" stroke-width="0.8" fill="none" opacity="0.55"/><path d="M407.1 214.4 Q405.0 183.6 400.2 152.9" stroke="#D6B476" stroke-width="0.8" fill="none" opacity="0.55"/><path d="M323.1 219.9 Q319.2 194.4 310.1 169.0" stroke="#D6B476" stroke-width="0.8" fill="none" opacity="0.55"/><path d="M18.8 179.0 Q12.5 143.6 -2.1 108.2" stroke="#CCA86A" stroke-width="0.8" fill="none" opacity="0.55"/><path d="M149.9 219.4 Q143.2 178.6 127.6 137.8" stroke="#CCA86A" stroke-width="0.8" fill="none" opacity="0.55"/><path d="M271.4 194.0 Q271.6 166.4 272.1 138.9" stroke="#D6B476" stroke-width="0.8" fill="none" opacity="0.55"/><path d="M23.7 178.1 Q24.3 141.1 25.9 104.2" stroke="#D6B476" stroke-width="0.8" fill="none" opacity="0.55"/><path d="M232.3 199.3 Q231.6 166.8 229.9 134.2" stroke="#CCA86A" stroke-width="0.8" fill="none" opacity="0.55"/><path d="M73.3 168.4 Q76.5 137.2 83.9 106.0" stroke="#CCA86A" stroke-width="0.8" fill="none" opacity="0.55"/><path d="M68.8 196.5 Q62.8 162.3 48.9 128.1" stroke="#CCA86A" stroke-width="0.8" fill="none" opacity="0.55"/><path d="M158.3 169.4 Q151.2 147.8 134.6 126.2" stroke="#B8925A" stroke-width="0.8" fill="none" opacity="0.55"/><path d="M217.6 151.0 Q221.3 100.6 229.8 50.1" stroke="#B8925A" stroke-width="0.8" fill="none" opacity="0.55"/><path d="M298.3 232.7 Q301.1 204.1 307.8 175.4" stroke="#B8925A" stroke-width="0.8" fill="none" opacity="0.55"/><path d="M62.5 219.7 Q66.8 184.8 76.7 149.8" stroke="#CCA86A" stroke-width="0.8" fill="none" opacity="0.55"/><path d="M48.7 188.5 Q42.1 152.8 26.7 117.1" stroke="#CCA86A" stroke-width="0.8" fill="none" opacity="0.55"/><path d="M410.2 175.6 Q406.0 127.5 396.3 79.3" stroke="#CCA86A" stroke-width="0.8" fill="none" opacity="0.55"/><path d="M96.8 219.1 Q100.0 185.1 107.4 151.1" stroke="#B8925A" stroke-width="0.8" fill="none" opacity="0.55"/><path d="M50.0 180.8 Q44.8 143.9 32.6 107.0" stroke="#B8925A" stroke-width="0.8" fill="none" opacity="0.55"/><path d="M120.5 226.8 Q126.7 194.4 141.2 162.1" stroke="#CCA86A" stroke-width="0.8" fill="none" opacity="0.55"/><path d="M61.7 231.9 Q58.3 175.4 50.3 118.9" stroke="#CCA86A" stroke-width="0.8" fill="none" opacity="0.55"/><path d="M223.1 202.7 Q220.5 164.0 214.4 125.2" stroke="#CCA86A" stroke-width="0.8" fill="none" opacity="0.55"/><path d="M41.1 153.2 Q39.2 120.2 34.7 87.3" stroke="#CCA86A" stroke-width="0.8" fill="none" opacity="0.55"/><path d="M61.9 210.1 Q61.4 182.7 60.4 155.2" stroke="#B8925A" stroke-width="0.8" fill="none" opacity="0.55"/><path d="M74.6 230.8 Q77.7 209.6 85.0 188.3" stroke="#D6B476" stroke-width="0.8" fill="none" opacity="0.55"/><path d="M143.4 206.5 Q142.1 161.6 139.0 116.8" stroke="#CCA86A" stroke-width="0.8" fill="none" opacity="0.55"/><path d="M30.2 156.2 Q29.4 117.6 27.7 79.0" stroke="#CCA86A" stroke-width="0.8" fill="none" opacity="0.55"/><path d="M26.1 162.2 Q23.2 121.9 16.5 81.7" stroke="#CCA86A" stroke-width="0.8" fill="none" opacity="0.55"/><path d="M95.7 151.9 Q92.2 107.7 84.2 63.5" stroke="#CCA86A" stroke-width="0.8" fill="none" opacity="0.55"/><path d="M128.8 171.1 Q129.5 151.1 131.0 131.0" stroke="#CCA86A" stroke-width="0.8" fill="none" opacity="0.55"/><path d="M20.6 199.2 Q24.5 145.3 33.8 91.3" stroke="#D6B476" stroke-width="0.8" fill="none" opacity="0.55"/><path d="M119.9 200.5 Q126.9 147.2 143.3 94.0" stroke="#CCA86A" stroke-width="0.8" fill="none" opacity="0.55"/><path d="M62.3 159.4 Q66.8 138.6 77.5 117.8" stroke="#D6B476" stroke-width="0.8" fill="none" opacity="0.55"/><path d="M131.3 211.8 Q136.1 153.2 147.5 94.7" stroke="#D6B476" stroke-width="0.8" fill="none" opacity="0.55"/><path d="M73.3 212.0 Q70.2 159.8 63.0 107.6" stroke="#CCA86A" stroke-width="0.8" fill="none" opacity="0.55"/><path d="M65.7 217.4 Q61.8 176.0 52.6 134.7" stroke="#D6B476" stroke-width="0.8" fill="none" opacity="0.55"/><path d="M78.0 213.6 Q81.5 156.9 89.8 100.2" stroke="#D6B476" stroke-width="0.8" fill="none" opacity="0.55"/><path d="M178.3 223.6 Q175.4 168.2 168.8 112.8" stroke="#CCA86A" stroke-width="0.8" fill="none" opacity="0.55"/><path d="M102.0 211.1 Q103.8 189.5 108.1 167.9" stroke="#CCA86A" stroke-width="0.8" fill="none" opacity="0.55"/><path d="M159.2 154.8 Q159.3 124.7 159.5 94.5" stroke="#B8925A" stroke-width="0.8" fill="none" opacity="0.55"/><path d="M82.8 214.4 Q86.0 184.4 93.6 154.3" stroke="#CCA86A" stroke-width="0.8" fill="none" opacity="0.55"/><path d="M49.4 227.0 Q50.3 198.8 52.6 170.7" stroke="#D6B476" stroke-width="0.8" fill="none" opacity="0.55"/><path d="M110.8 187.9 Q112.6 139.6 116.9 91.3" stroke="#CCA86A" stroke-width="0.8" fill="none" opacity="0.55"/><path d="M148.2 161.3 Q150.7 126.2 156.7 91.1" stroke="#D6B476" stroke-width="0.8" fill="none" opacity="0.55"/><path d="M124.3 237.6 Q127.2 198.8 134.0 159.9" stroke="#D6B476" stroke-width="0.8" fill="none" opacity="0.55"/><path d="M62.9 174.4 Q65.4 144.3 71.2 114.2" stroke="#CCA86A" stroke-width="0.8" fill="none" opacity="0.55"/><path d="M169.3 239.0 Q172.5 217.0 180.0 195.1" stroke="#D6B476" stroke-width="0.8" fill="none" opacity="0.55"/><path d="M159.3 167.4 Q159.9 133.2 161.3 98.9" stroke="#D6B476" stroke-width="0.8" fill="none" opacity="0.55"/>
<path d="M202.7 241.2 Q202.3 220.0 202.0 198.8" stroke="#CBA868" stroke-width="0.61" fill="none" opacity="0.69"/><path d="M360.1 229.0 Q357.0 213.2 353.9 197.5" stroke="#8A6638" stroke-width="0.55" fill="none" opacity="0.47"/><path d="M362.7 260.5 Q367.5 254.8 372.4 249.1" stroke="#8A6638" stroke-width="0.87" fill="none" opacity="0.61"/><path d="M70.6 162.2 Q66.2 147.9 61.7 133.7" stroke="#D8BA7A" stroke-width="0.86" fill="none" opacity="0.70"/><path d="M348.6 207.3 Q345.5 192.0 342.5 176.6" stroke="#D8BA7A" stroke-width="0.80" fill="none" opacity="0.61"/><path d="M296.8 226.3 Q301.8 216.4 306.7 206.6" stroke="#E2C88C" stroke-width="0.69" fill="none" opacity="0.63"/><path d="M102.9 201.9 Q105.6 195.7 108.2 189.5" stroke="#8A6638" stroke-width="0.67" fill="none" opacity="0.39"/><path d="M29.9 162.4 Q27.1 145.5 24.2 128.5" stroke="#E2C88C" stroke-width="1.09" fill="none" opacity="0.54"/><path d="M178.0 170.6 Q180.8 154.6 183.6 138.6" stroke="#9A7442" stroke-width="0.69" fill="none" opacity="0.48"/><path d="M6.8 219.5 Q3.1 198.3 -0.5 177.2" stroke="#E2C88C" stroke-width="0.78" fill="none" opacity="0.35"/><path d="M218.1 258.9 Q218.2 250.6 218.3 242.3" stroke="#D8BA7A" stroke-width="0.73" fill="none" opacity="0.52"/><path d="M176.9 303.6 Q180.5 298.5 184.2 293.5" stroke="#CBA868" stroke-width="1.03" fill="none" opacity="0.47"/><path d="M94.4 217.2 Q95.8 197.2 97.2 177.3" stroke="#E2C88C" stroke-width="0.59" fill="none" opacity="0.37"/><path d="M197.8 161.4 Q201.1 145.7 204.4 130.0" stroke="#8A6638" stroke-width="0.55" fill="none" opacity="0.38"/><path d="M261.1 195.2 Q259.8 179.7 258.5 164.2" stroke="#8A6638" stroke-width="0.85" fill="none" opacity="0.40"/><path d="M372.9 179.7 Q374.2 167.9 375.4 156.2" stroke="#9A7442" stroke-width="0.99" fill="none" opacity="0.71"/><path d="M111.8 187.5 Q116.2 169.6 120.6 151.6" stroke="#D8BA7A" stroke-width="0.73" fill="none" opacity="0.62"/><path d="M216.2 171.4 Q212.3 165.6 208.3 159.7" stroke="#CBA868" stroke-width="0.64" fill="none" opacity="0.74"/><path d="M315.7 197.3 Q316.6 177.8 317.6 158.4" stroke="#9A7442" stroke-width="1.06" fill="none" opacity="0.56"/><path d="M437.8 178.3 Q439.3 164.9 440.8 151.6" stroke="#CBA868" stroke-width="0.67" fill="none" opacity="0.60"/><path d="M411.0 189.6 Q408.7 184.3 406.4 179.0" stroke="#8A6638" stroke-width="0.53" fill="none" opacity="0.45"/><path d="M126.3 237.0 Q122.2 215.0 118.2 192.9" stroke="#D8BA7A" stroke-width="1.09" fill="none" opacity="0.71"/><path d="M294.3 260.2 Q290.7 245.0 287.1 229.8" stroke="#E2C88C" stroke-width="0.78" fill="none" opacity="0.72"/><path d="M160.1 205.2 Q161.1 199.6 162.1 194.0" stroke="#E2C88C" stroke-width="0.94" fill="none" opacity="0.54"/><path d="M142.9 304.9 Q143.3 298.6 143.8 292.3" stroke="#E2C88C" stroke-width="0.94" fill="none" opacity="0.71"/><path d="M315.3 275.0 Q313.8 254.0 312.3 233.0" stroke="#8A6638" stroke-width="1.02" fill="none" opacity="0.71"/><path d="M186.9 274.6 Q187.6 254.5 188.3 234.4" stroke="#CBA868" stroke-width="0.73" fill="none" opacity="0.61"/><path d="M5.6 170.5 Q1.7 163.9 -2.1 157.3" stroke="#9A7442" stroke-width="0.94" fill="none" opacity="0.70"/><path d="M174.0 266.6 Q173.4 251.4 172.8 236.2" stroke="#CBA868" stroke-width="0.95" fill="none" opacity="0.38"/><path d="M13.3 247.2 Q10.6 233.8 8.0 220.4" stroke="#E2C88C" stroke-width="0.87" fill="none" opacity="0.55"/><path d="M412.4 197.1 Q410.4 191.9 408.4 186.7" stroke="#CBA868" stroke-width="0.60" fill="none" opacity="0.43"/><path d="M405.8 255.7 Q409.7 243.0 413.6 230.2" stroke="#9A7442" stroke-width="0.65" fill="none" opacity="0.51"/><path d="M284.1 276.5 Q281.1 258.3 278.1 240.1" stroke="#D8BA7A" stroke-width="0.85" fill="none" opacity="0.50"/><path d="M141.8 179.7 Q145.2 166.1 148.5 152.4" stroke="#E2C88C" stroke-width="1.07" fill="none" opacity="0.63"/><path d="M124.0 184.5 Q121.8 171.6 119.5 158.8" stroke="#D8BA7A" stroke-width="0.73" fill="none" opacity="0.68"/><path d="M232.9 257.5 Q236.4 239.9 239.8 222.4" stroke="#CBA868" stroke-width="0.54" fill="none" opacity="0.53"/><path d="M14.1 286.6 Q16.2 280.8 18.3 275.1" stroke="#CBA868" stroke-width="0.89" fill="none" opacity="0.49"/><path d="M252.7 252.9 Q249.6 240.9 246.5 228.8" stroke="#9A7442" stroke-width="0.58" fill="none" opacity="0.44"/><path d="M21.0 251.2 Q22.3 238.4 23.6 225.6" stroke="#9A7442" stroke-width="0.91" fill="none" opacity="0.73"/><path d="M89.3 228.9 Q84.4 220.8 79.5 212.6" stroke="#8A6638" stroke-width="0.52" fill="none" opacity="0.56"/><path d="M101.5 272.9 Q105.9 258.5 110.4 244.0" stroke="#CBA868" stroke-width="0.95" fill="none" opacity="0.60"/><path d="M176.3 274.8 Q172.2 254.0 168.0 233.1" stroke="#8A6638" stroke-width="0.77" fill="none" opacity="0.40"/><path d="M280.2 291.9 Q280.9 280.4 281.6 268.8" stroke="#CBA868" stroke-width="1.07" fill="none" opacity="0.67"/><path d="M207.7 254.4 Q210.0 245.9 212.2 237.3" stroke="#E2C88C" stroke-width="1.04" fill="none" opacity="0.44"/><path d="M439.3 301.7 Q442.2 287.3 445.1 272.9" stroke="#9A7442" stroke-width="0.93" fill="none" opacity="0.45"/><path d="M7.0 233.2 Q5.4 227.5 3.9 221.9" stroke="#8A6638" stroke-width="0.79" fill="none" opacity="0.66"/><path d="M12.7 277.3 Q15.7 271.2 18.7 265.1" stroke="#D8BA7A" stroke-width="0.91" fill="none" opacity="0.56"/><path d="M410.4 228.2 Q414.4 205.7 418.4 183.2" stroke="#CBA868" stroke-width="0.91" fill="none" opacity="0.69"/><path d="M423.7 231.4 Q419.6 209.8 415.4 188.2" stroke="#D8BA7A" stroke-width="0.84" fill="none" opacity="0.53"/><path d="M372.4 241.4 Q372.5 233.5 372.6 225.7" stroke="#CBA868" stroke-width="0.90" fill="none" opacity="0.45"/><path d="M427.7 286.2 Q425.8 270.5 423.8 254.8" stroke="#D8BA7A" stroke-width="0.81" fill="none" opacity="0.74"/><path d="M256.7 189.1 Q256.7 174.8 256.8 160.4" stroke="#CBA868" stroke-width="0.82" fill="none" opacity="0.50"/><path d="M19.7 293.0 Q24.6 278.5 29.5 264.0" stroke="#E2C88C" stroke-width="0.91" fill="none" opacity="0.55"/><path d="M29.5 238.1 Q34.1 225.9 38.7 213.6" stroke="#8A6638" stroke-width="0.78" fill="none" opacity="0.46"/><path d="M56.9 222.9 Q60.9 203.6 64.9 184.3" stroke="#8A6638" stroke-width="0.57" fill="none" opacity="0.56"/><path d="M188.0 164.3 Q190.0 154.7 192.0 145.2" stroke="#E2C88C" stroke-width="0.59" fill="none" opacity="0.36"/><path d="M5.3 201.2 Q2.7 183.5 0.2 165.9" stroke="#8A6638" stroke-width="0.94" fill="none" opacity="0.39"/><path d="M55.0 234.0 Q52.0 224.6 49.0 215.2" stroke="#CBA868" stroke-width="0.51" fill="none" opacity="0.70"/><path d="M283.6 279.7 Q284.0 263.9 284.4 248.1" stroke="#CBA868" stroke-width="0.82" fill="none" opacity="0.61"/><path d="M381.4 248.7 Q378.7 228.7 376.0 208.7" stroke="#9A7442" stroke-width="0.69" fill="none" opacity="0.71"/><path d="M141.1 293.8 Q146.1 285.0 151.1 276.2" stroke="#E2C88C" stroke-width="0.64" fill="none" opacity="0.40"/><path d="M325.5 197.6 Q328.8 190.9 332.1 184.2" stroke="#8A6638" stroke-width="0.92" fill="none" opacity="0.57"/><path d="M89.9 251.1 Q85.8 232.1 81.8 213.1" stroke="#CBA868" stroke-width="1.05" fill="none" opacity="0.62"/><path d="M433.8 176.7 Q436.4 162.9 439.0 149.0" stroke="#CBA868" stroke-width="1.00" fill="none" opacity="0.75"/><path d="M359.7 229.9 Q362.3 224.5 364.9 219.1" stroke="#CBA868" stroke-width="0.84" fill="none" opacity="0.56"/><path d="M65.7 186.8 Q69.1 178.2 72.5 169.6" stroke="#9A7442" stroke-width="0.56" fill="none" opacity="0.72"/><path d="M27.8 298.0 Q30.4 284.9 33.0 271.8" stroke="#9A7442" stroke-width="0.76" fill="none" opacity="0.51"/><path d="M158.8 190.5 Q160.2 178.9 161.5 167.4" stroke="#E2C88C" stroke-width="0.61" fill="none" opacity="0.69"/><path d="M203.4 267.2 Q200.3 255.1 197.3 243.0" stroke="#D8BA7A" stroke-width="0.98" fill="none" opacity="0.39"/><path d="M145.0 172.3 Q148.8 152.6 152.5 132.8" stroke="#8A6638" stroke-width="0.61" fill="none" opacity="0.58"/><path d="M261.9 209.4 Q259.7 191.1 257.5 172.8" stroke="#E2C88C" stroke-width="0.97" fill="none" opacity="0.65"/><path d="M365.0 218.8 Q368.8 198.1 372.6 177.4" stroke="#9A7442" stroke-width="0.96" fill="none" opacity="0.66"/><path d="M181.8 264.8 Q180.2 258.5 178.6 252.3" stroke="#8A6638" stroke-width="1.03" fill="none" opacity="0.39"/><path d="M443.8 290.9 Q441.5 285.0 439.2 279.2" stroke="#9A7442" stroke-width="0.90" fill="none" opacity="0.49"/><path d="M255.2 237.3 Q260.2 225.5 265.2 213.7" stroke="#D8BA7A" stroke-width="0.96" fill="none" opacity="0.63"/><path d="M439.1 163.3 Q441.5 147.5 443.9 131.8" stroke="#9A7442" stroke-width="0.80" fill="none" opacity="0.53"/><path d="M341.1 254.0 Q338.7 248.8 336.2 243.6" stroke="#9A7442" stroke-width="0.83" fill="none" opacity="0.71"/><path d="M227.5 300.2 Q232.5 285.3 237.4 270.4" stroke="#8A6638" stroke-width="0.55" fill="none" opacity="0.67"/><path d="M267.7 270.1 Q272.0 264.3 276.3 258.5" stroke="#D8BA7A" stroke-width="1.08" fill="none" opacity="0.50"/><path d="M383.3 238.6 Q382.6 223.1 381.9 207.7" stroke="#8A6638" stroke-width="0.82" fill="none" opacity="0.52"/><path d="M267.8 213.0 Q269.4 203.0 270.9 193.0" stroke="#CBA868" stroke-width="0.90" fill="none" opacity="0.72"/><path d="M335.0 163.9 Q335.8 145.4 336.7 126.9" stroke="#D8BA7A" stroke-width="0.91" fill="none" opacity="0.51"/><path d="M23.7 205.7 Q24.5 193.7 25.3 181.8" stroke="#9A7442" stroke-width="1.04" fill="none" opacity="0.38"/><path d="M192.4 229.3 Q189.9 207.2 187.3 185.2" stroke="#CBA868" stroke-width="0.99" fill="none" opacity="0.39"/><path d="M407.4 180.9 Q404.9 159.1 402.3 137.3" stroke="#E2C88C" stroke-width="0.75" fill="none" opacity="0.37"/><path d="M52.8 284.9 Q49.4 273.6 45.9 262.4" stroke="#9A7442" stroke-width="0.90" fill="none" opacity="0.53"/><path d="M204.1 198.0 Q203.3 182.8 202.5 167.6" stroke="#CBA868" stroke-width="0.58" fill="none" opacity="0.68"/><path d="M130.0 178.7 Q130.0 165.3 130.0 151.8" stroke="#9A7442" stroke-width="0.87" fill="none" opacity="0.66"/><path d="M160.9 199.4 Q161.6 182.4 162.2 165.4" stroke="#CBA868" stroke-width="0.67" fill="none" opacity="0.43"/><path d="M107.3 298.0 Q108.8 284.2 110.3 270.4" stroke="#D8BA7A" stroke-width="0.52" fill="none" opacity="0.70"/><path d="M27.2 199.3 Q28.5 186.8 29.7 174.4" stroke="#E2C88C" stroke-width="0.67" fill="none" opacity="0.44"/><path d="M338.6 292.4 Q335.9 284.6 333.3 276.7" stroke="#9A7442" stroke-width="0.71" fill="none" opacity="0.54"/><path d="M151.5 231.7 Q155.2 224.4 158.9 217.0" stroke="#E2C88C" stroke-width="0.99" fill="none" opacity="0.53"/><path d="M375.4 271.5 Q377.9 258.7 380.4 245.9" stroke="#8A6638" stroke-width="0.72" fill="none" opacity="0.67"/><path d="M292.8 303.4 Q293.3 292.7 293.8 282.0" stroke="#D8BA7A" stroke-width="0.72" fill="none" opacity="0.52"/><path d="M43.5 286.9 Q39.3 280.5 35.1 274.2" stroke="#CBA868" stroke-width="0.99" fill="none" opacity="0.58"/><path d="M207.7 279.4 Q205.8 274.2 203.9 269.1" stroke="#CBA868" stroke-width="0.68" fill="none" opacity="0.38"/><path d="M324.8 260.6 Q321.2 250.7 317.7 240.7" stroke="#9A7442" stroke-width="0.70" fill="none" opacity="0.61"/><path d="M406.0 206.8 Q407.0 194.0 407.9 181.3" stroke="#9A7442" stroke-width="0.98" fill="none" opacity="0.53"/><path d="M136.5 206.1 Q140.9 194.1 145.2 182.1" stroke="#CBA868" stroke-width="0.72" fill="none" opacity="0.45"/><path d="M163.8 212.7 Q162.6 200.8 161.5 188.8" stroke="#D8BA7A" stroke-width="0.72" fill="none" opacity="0.65"/><path d="M174.8 182.4 Q171.6 167.1 168.4 151.8" stroke="#E2C88C" stroke-width="1.03" fill="none" opacity="0.65"/><path d="M126.1 163.2 Q126.5 149.2 127.0 135.2" stroke="#CBA868" stroke-width="0.51" fill="none" opacity="0.47"/><path d="M377.1 221.3 Q375.1 206.1 373.2 190.9" stroke="#CBA868" stroke-width="0.55" fill="none" opacity="0.38"/><path d="M330.2 290.4 Q331.5 283.9 332.9 277.4" stroke="#D8BA7A" stroke-width="0.99" fill="none" opacity="0.39"/><path d="M189.1 263.3 Q193.2 249.7 197.2 236.2" stroke="#9A7442" stroke-width="0.74" fill="none" opacity="0.66"/><path d="M151.3 300.4 Q151.3 283.6 151.2 266.9" stroke="#CBA868" stroke-width="0.54" fill="none" opacity="0.67"/><path d="M276.9 166.7 Q281.8 148.5 286.6 130.2" stroke="#9A7442" stroke-width="0.98" fill="none" opacity="0.69"/><path d="M373.6 288.9 Q375.0 267.1 376.4 245.3" stroke="#CBA868" stroke-width="0.51" fill="none" opacity="0.49"/><path d="M49.2 293.9 Q46.7 272.9 44.2 251.9" stroke="#D8BA7A" stroke-width="0.73" fill="none" opacity="0.75"/><path d="M75.1 189.6 Q73.0 177.2 71.0 164.8" stroke="#E2C88C" stroke-width="0.94" fill="none" opacity="0.54"/><path d="M136.0 182.5 Q140.1 161.5 144.2 140.4" stroke="#8A6638" stroke-width="0.79" fill="none" opacity="0.36"/><path d="M358.6 205.3 Q357.2 196.9 355.8 188.4" stroke="#CBA868" stroke-width="0.93" fill="none" opacity="0.44"/><path d="M266.5 192.5 Q264.3 184.2 262.1 176.0" stroke="#D8BA7A" stroke-width="1.06" fill="none" opacity="0.71"/><path d="M280.8 296.6 Q284.3 282.0 287.9 267.3" stroke="#8A6638" stroke-width="1.05" fill="none" opacity="0.70"/><path d="M153.2 239.4 Q153.1 217.6 152.9 195.9" stroke="#D8BA7A" stroke-width="0.63" fill="none" opacity="0.51"/><path d="M60.2 275.8 Q63.1 253.7 66.1 231.6" stroke="#9A7442" stroke-width="0.53" fill="none" opacity="0.67"/><path d="M414.1 289.4 Q418.1 269.1 422.2 248.8" stroke="#8A6638" stroke-width="0.93" fill="none" opacity="0.67"/><path d="M271.5 182.8 Q269.7 175.1 268.0 167.3" stroke="#9A7442" stroke-width="0.99" fill="none" opacity="0.71"/><path d="M58.7 267.5 Q58.9 251.7 59.1 235.9" stroke="#E2C88C" stroke-width="0.96" fill="none" opacity="0.41"/><path d="M0.6 279.1 Q3.8 259.3 7.1 239.5" stroke="#E2C88C" stroke-width="0.87" fill="none" opacity="0.49"/><path d="M236.5 289.0 Q232.3 271.9 228.2 254.7" stroke="#CBA868" stroke-width="0.80" fill="none" opacity="0.57"/><path d="M8.5 187.2 Q10.3 178.8 12.2 170.5" stroke="#8A6638" stroke-width="0.83" fill="none" opacity="0.43"/><path d="M235.5 182.8 Q233.6 163.3 231.7 143.7" stroke="#9A7442" stroke-width="0.83" fill="none" opacity="0.51"/><path d="M446.8 256.7 Q442.5 250.6 438.3 244.4" stroke="#D8BA7A" stroke-width="0.74" fill="none" opacity="0.39"/><path d="M206.9 300.2 Q208.4 280.7 209.9 261.2" stroke="#E2C88C" stroke-width="0.93" fill="none" opacity="0.70"/><path d="M212.9 202.6 Q215.6 195.6 218.4 188.6" stroke="#D8BA7A" stroke-width="0.59" fill="none" opacity="0.71"/><path d="M281.2 295.9 Q285.8 277.8 290.3 259.7" stroke="#8A6638" stroke-width="0.55" fill="none" opacity="0.57"/><path d="M84.5 214.6 Q82.6 207.7 80.7 200.8" stroke="#9A7442" stroke-width="0.93" fill="none" opacity="0.58"/><path d="M148.6 279.9 Q145.0 273.3 141.4 266.7" stroke="#E2C88C" stroke-width="0.88" fill="none" opacity="0.40"/><path d="M80.3 188.0 Q79.9 182.4 79.6 176.7" stroke="#E2C88C" stroke-width="0.52" fill="none" opacity="0.39"/><path d="M442.4 222.9 Q440.8 204.4 439.2 185.9" stroke="#8A6638" stroke-width="0.58" fill="none" opacity="0.72"/><path d="M92.0 181.5 Q91.9 164.4 91.7 147.3" stroke="#8A6638" stroke-width="0.94" fill="none" opacity="0.60"/><path d="M274.7 206.1 Q272.1 187.3 269.6 168.5" stroke="#CBA868" stroke-width="0.66" fill="none" opacity="0.56"/><path d="M84.6 204.5 Q85.1 191.8 85.7 179.0" stroke="#D8BA7A" stroke-width="0.97" fill="none" opacity="0.55"/><path d="M369.7 248.7 Q372.3 240.9 375.0 233.1" stroke="#9A7442" stroke-width="0.71" fill="none" opacity="0.57"/><path d="M224.2 180.6 Q229.1 163.1 233.9 145.6" stroke="#CBA868" stroke-width="0.92" fill="none" opacity="0.75"/><path d="M419.3 242.3 Q420.9 236.8 422.5 231.3" stroke="#E2C88C" stroke-width="0.79" fill="none" opacity="0.40"/><path d="M187.0 208.4 Q190.8 201.8 194.5 195.2" stroke="#9A7442" stroke-width="0.57" fill="none" opacity="0.54"/><path d="M436.2 179.7 Q436.6 158.8 437.0 138.0" stroke="#CBA868" stroke-width="1.05" fill="none" opacity="0.38"/><path d="M75.5 268.1 Q73.9 247.4 72.2 226.7" stroke="#D8BA7A" stroke-width="0.99" fill="none" opacity="0.40"/><path d="M129.3 290.1 Q130.0 280.9 130.8 271.6" stroke="#D8BA7A" stroke-width="0.83" fill="none" opacity="0.42"/><path d="M34.2 164.6 Q39.0 156.5 43.9 148.3" stroke="#D8BA7A" stroke-width="0.90" fill="none" opacity="0.47"/><path d="M330.5 215.3 Q333.5 200.0 336.6 184.6" stroke="#E2C88C" stroke-width="0.75" fill="none" opacity="0.41"/><path d="M14.8 236.5 Q13.9 229.5 12.9 222.4" stroke="#9A7442" stroke-width="0.66" fill="none" opacity="0.56"/><path d="M254.5 208.2 Q249.9 191.9 245.2 175.7" stroke="#D8BA7A" stroke-width="0.80" fill="none" opacity="0.51"/><path d="M45.9 210.1 Q50.1 189.4 54.2 168.7" stroke="#CBA868" stroke-width="0.95" fill="none" opacity="0.65"/><path d="M217.6 304.2 Q221.2 284.5 224.7 264.9" stroke="#8A6638" stroke-width="0.57" fill="none" opacity="0.68"/><path d="M51.4 296.1 Q51.6 285.4 51.8 274.6" stroke="#8A6638" stroke-width="0.69" fill="none" opacity="0.71"/><path d="M24.5 265.2 Q26.8 244.5 29.1 223.7" stroke="#CBA868" stroke-width="0.97" fill="none" opacity="0.48"/><path d="M395.4 287.2 Q398.8 277.9 402.3 268.6" stroke="#D8BA7A" stroke-width="0.74" fill="none" opacity="0.55"/><path d="M23.3 260.8 Q20.7 246.6 18.1 232.3" stroke="#9A7442" stroke-width="1.06" fill="none" opacity="0.61"/><path d="M394.1 304.9 Q397.8 287.1 401.6 269.3" stroke="#9A7442" stroke-width="0.75" fill="none" opacity="0.70"/><path d="M360.8 192.2 Q361.4 174.1 362.1 156.0" stroke="#E2C88C" stroke-width="0.98" fill="none" opacity="0.39"/><path d="M55.5 238.0 Q50.5 216.3 45.5 194.7" stroke="#D8BA7A" stroke-width="0.51" fill="none" opacity="0.64"/><path d="M77.1 223.9 Q77.4 211.0 77.7 198.2" stroke="#D8BA7A" stroke-width="0.85" fill="none" opacity="0.49"/><path d="M20.6 164.5 Q18.6 143.8 16.7 123.1" stroke="#8A6638" stroke-width="0.97" fill="none" opacity="0.41"/><path d="M347.9 287.4 Q351.5 278.9 355.1 270.3" stroke="#E2C88C" stroke-width="1.00" fill="none" opacity="0.43"/><path d="M158.7 228.5 Q162.5 220.5 166.3 212.5" stroke="#CBA868" stroke-width="0.88" fill="none" opacity="0.43"/><path d="M85.8 287.6 Q81.9 281.7 77.9 275.9" stroke="#9A7442" stroke-width="0.66" fill="none" opacity="0.73"/><path d="M188.3 287.5 Q192.9 276.6 197.5 265.7" stroke="#8A6638" stroke-width="0.60" fill="none" opacity="0.52"/><path d="M386.0 177.5 Q383.7 160.4 381.3 143.3" stroke="#D8BA7A" stroke-width="0.68" fill="none" opacity="0.55"/><path d="M122.4 276.5 Q118.6 262.4 114.8 248.2" stroke="#CBA868" stroke-width="0.68" fill="none" opacity="0.44"/><path d="M415.2 256.7 Q416.6 246.9 418.0 237.0" stroke="#E2C88C" stroke-width="0.55" fill="none" opacity="0.54"/><path d="M410.9 170.7 Q406.0 149.8 401.0 128.9" stroke="#CBA868" stroke-width="0.65" fill="none" opacity="0.46"/><path d="M359.8 172.6 Q362.4 162.6 365.0 152.7" stroke="#D8BA7A" stroke-width="0.94" fill="none" opacity="0.42"/><path d="M12.9 274.6 Q16.9 267.0 20.9 259.3" stroke="#CBA868" stroke-width="0.95" fill="none" opacity="0.53"/><path d="M172.4 294.7 Q169.1 281.0 165.9 267.2" stroke="#CBA868" stroke-width="1.05" fill="none" opacity="0.66"/><path d="M143.7 230.1 Q141.6 224.5 139.5 219.0" stroke="#CBA868" stroke-width="0.82" fill="none" opacity="0.65"/><path d="M266.1 271.8 Q265.4 264.9 264.8 257.9" stroke="#8A6638" stroke-width="0.65" fill="none" opacity="0.57"/>
<g filter="url(#dsoft)">
<!-- antlers -->
<path d="M226 109 Q214 90 207 64 Q203 48 203 33" stroke="#8E6C4A" stroke-width="3.6" fill="none" stroke-linecap="round"/>
<path d="M210 76 Q213 68 212 62" stroke="#8E6C4A" stroke-width="2.6" fill="none" stroke-linecap="round"/>
<path d="M246 109 Q266 97 279 76 Q287 60 287 47" stroke="#8E6C4A" stroke-width="3.6" fill="none" stroke-linecap="round"/>
<path d="M272 92 Q270 82 270.5 71" stroke="#8E6C4A" stroke-width="2.6" fill="none" stroke-linecap="round"/>
<!-- far legs -->
<path d="M62 200 C58 215 60 235 64 258 L70 258 C70 240 72 225 76 212 Z" fill="#5A2A0E"/>
<path d="M190 204 L202 204 C200 225 199 245 198 276 L193 276 C193 250 192 225 190 204 Z" fill="#7E5230"/>
<path d="M193 240 L199 240 L198 276 L193 276 Z" fill="#D8C8B0"/>
<!-- near front leg -->
<path d="M175 204 L193 206 C190 225 188 240 187.5 284 L180 284 C180 250 178 225 175 204 Z" fill="#8A5A32"/>
<path d="M180 245 L188 245 L187.5 284 L180 284 Z" fill="#E6DAC4"/>
<!-- body + near hind leg -->
<path d="M63.5 156 C70 146 80 143 100 143 C140 144 180 146 201 147.6 C210 146 218 138 222 124 L246 126 C247 140 245 155 240 166 C234 180 222 192 212 196 C205 204 195 208 176 208 C150 208 125 203 110 198 C104 206 96 214 90 222 C85 230 83 240 82 260 L76 261 C75 245 72 232 69 222 C63 205 60 180 63.5 156 Z" fill="#7C3A12"/>
<path d="M201 147.6 C210 146 218 138 222 124 L236 124 C236 145 228 170 214 192 C208 175 205 160 201 147.6 Z" fill="#8E5E34" opacity="0.9"/>
<path d="M66 152 C75 145 85 143 100 143 C140 144 180 146 201 147.6" stroke="#2A1206" stroke-width="2.3" fill="none"/>
<circle cx="72.0" cy="146.6" r="0.7" fill="#F0E6D0" opacity="0.6"/><circle cx="76.2" cy="146.6" r="0.7" fill="#F0E6D0" opacity="0.6"/><circle cx="80.4" cy="146.6" r="0.7" fill="#F0E6D0" opacity="0.6"/><circle cx="84.6" cy="146.6" r="0.7" fill="#F0E6D0" opacity="0.6"/><circle cx="88.8" cy="146.6" r="0.7" fill="#F0E6D0" opacity="0.6"/><circle cx="93.0" cy="146.6" r="0.7" fill="#F0E6D0" opacity="0.6"/><circle cx="97.2" cy="146.6" r="0.7" fill="#F0E6D0" opacity="0.6"/><circle cx="101.4" cy="146.6" r="0.7" fill="#F0E6D0" opacity="0.6"/><circle cx="105.6" cy="146.6" r="0.7" fill="#F0E6D0" opacity="0.6"/><circle cx="109.8" cy="146.6" r="0.7" fill="#F0E6D0" opacity="0.6"/><circle cx="114.0" cy="146.6" r="0.7" fill="#F0E6D0" opacity="0.6"/><circle cx="118.2" cy="146.6" r="0.7" fill="#F0E6D0" opacity="0.6"/><circle cx="122.4" cy="146.6" r="0.7" fill="#F0E6D0" opacity="0.6"/><circle cx="126.6" cy="146.6" r="0.7" fill="#F0E6D0" opacity="0.6"/><circle cx="130.8" cy="146.6" r="0.7" fill="#F0E6D0" opacity="0.6"/><circle cx="135.0" cy="146.6" r="0.7" fill="#F0E6D0" opacity="0.6"/><circle cx="139.2" cy="146.6" r="0.7" fill="#F0E6D0" opacity="0.6"/><circle cx="143.4" cy="146.6" r="0.7" fill="#F0E6D0" opacity="0.6"/><circle cx="147.6" cy="146.6" r="0.7" fill="#F0E6D0" opacity="0.6"/><circle cx="151.8" cy="146.6" r="0.7" fill="#F0E6D0" opacity="0.6"/><circle cx="156.0" cy="146.6" r="0.7" fill="#F0E6D0" opacity="0.6"/><circle cx="160.2" cy="146.6" r="0.7" fill="#F0E6D0" opacity="0.6"/><circle cx="164.4" cy="146.6" r="0.7" fill="#F0E6D0" opacity="0.6"/><circle cx="168.6" cy="146.6" r="0.7" fill="#F0E6D0" opacity="0.6"/><circle cx="172.8" cy="146.6" r="0.7" fill="#F0E6D0" opacity="0.6"/><circle cx="177.0" cy="146.6" r="0.7" fill="#F0E6D0" opacity="0.6"/><circle cx="181.2" cy="146.6" r="0.7" fill="#F0E6D0" opacity="0.6"/><circle cx="185.4" cy="146.6" r="0.7" fill="#F0E6D0" opacity="0.6"/><circle cx="189.6" cy="146.6" r="0.7" fill="#F0E6D0" opacity="0.6"/><circle cx="193.8" cy="146.6" r="0.7" fill="#F0E6D0" opacity="0.6"/><circle cx="198.0" cy="146.6" r="0.7" fill="#F0E6D0" opacity="0.6"/>
<path d="M110 197 C140 202 170 205 200 200" stroke="#EADCC4" stroke-width="1.3" fill="none" opacity="0.85"/>
<path d="M66 162 C70 177 76 190 86 200" stroke="#E6D6BC" stroke-width="0.9" fill="none" opacity="0.6"/>
<path d="M78 238 L82 260 L77 260 Z" fill="#D8C8B0" opacity="0.7"/>
<!-- tail -->
<path d="M63.5 156 C57 170 56 185 58 195 L62 195 C62 180 64 168 67 160 Z" fill="#3E1A06"/>
<ellipse cx="83.1" cy="151.9" rx="1.8" ry="1.2" fill="#F4EAD6" opacity="0.92"/><ellipse cx="91.5" cy="152.6" rx="1.8" ry="1.2" fill="#F4EAD6" opacity="0.92"/><ellipse cx="99.7" cy="152.5" rx="1.8" ry="1.2" fill="#F4EAD6" opacity="0.92"/><ellipse cx="105.8" cy="150.9" rx="1.8" ry="1.2" fill="#F4EAD6" opacity="0.92"/><ellipse cx="114.6" cy="151.5" rx="1.8" ry="1.2" fill="#F4EAD6" opacity="0.92"/><ellipse cx="123.3" cy="149.6" rx="1.8" ry="1.2" fill="#F4EAD6" opacity="0.92"/><ellipse cx="130.7" cy="150.1" rx="1.8" ry="1.2" fill="#F4EAD6" opacity="0.92"/><ellipse cx="138.4" cy="151.3" rx="1.8" ry="1.2" fill="#F4EAD6" opacity="0.92"/><ellipse cx="144.4" cy="150.0" rx="1.8" ry="1.2" fill="#F4EAD6" opacity="0.92"/><ellipse cx="151.3" cy="152.5" rx="1.8" ry="1.2" fill="#F4EAD6" opacity="0.92"/><ellipse cx="159.6" cy="149.8" rx="1.8" ry="1.2" fill="#F4EAD6" opacity="0.92"/><ellipse cx="167.9" cy="149.7" rx="1.8" ry="1.2" fill="#F4EAD6" opacity="0.92"/><ellipse cx="175.8" cy="149.7" rx="1.8" ry="1.2" fill="#F4EAD6" opacity="0.92"/><ellipse cx="181.8" cy="152.3" rx="1.8" ry="1.2" fill="#F4EAD6" opacity="0.92"/><ellipse cx="188.4" cy="150.0" rx="1.8" ry="1.2" fill="#F4EAD6" opacity="0.92"/><ellipse cx="197.4" cy="152.3" rx="1.8" ry="1.2" fill="#F4EAD6" opacity="0.92"/><ellipse cx="74.8" cy="158.1" rx="1.8" ry="1.2" fill="#F4EAD6" opacity="0.92"/><ellipse cx="82.8" cy="156.9" rx="1.8" ry="1.2" fill="#F4EAD6" opacity="0.92"/><ellipse cx="91.7" cy="158.7" rx="1.8" ry="1.2" fill="#F4EAD6" opacity="0.92"/><ellipse cx="100.6" cy="159.4" rx="1.8" ry="1.2" fill="#F4EAD6" opacity="0.92"/><ellipse cx="107.5" cy="157.5" rx="1.8" ry="1.2" fill="#F4EAD6" opacity="0.92"/><ellipse cx="114.0" cy="156.7" rx="1.8" ry="1.2" fill="#F4EAD6" opacity="0.92"/><ellipse cx="120.2" cy="157.3" rx="1.8" ry="1.2" fill="#F4EAD6" opacity="0.92"/><ellipse cx="128.0" cy="156.2" rx="1.8" ry="1.2" fill="#F4EAD6" opacity="0.92"/><ellipse cx="136.0" cy="157.4" rx="1.8" ry="1.2" fill="#F4EAD6" opacity="0.92"/><ellipse cx="142.9" cy="159.1" rx="1.8" ry="1.2" fill="#F4EAD6" opacity="0.92"/><ellipse cx="150.4" cy="157.3" rx="1.8" ry="1.2" fill="#F4EAD6" opacity="0.92"/><ellipse cx="157.8" cy="158.7" rx="1.8" ry="1.2" fill="#F4EAD6" opacity="0.92"/><ellipse cx="164.0" cy="159.7" rx="1.8" ry="1.2" fill="#F4EAD6" opacity="0.92"/><ellipse cx="170.1" cy="158.9" rx="1.8" ry="1.2" fill="#F4EAD6" opacity="0.92"/><ellipse cx="178.6" cy="156.3" rx="1.8" ry="1.2" fill="#F4EAD6" opacity="0.92"/><ellipse cx="186.9" cy="157.5" rx="1.8" ry="1.2" fill="#F4EAD6" opacity="0.92"/><ellipse cx="194.7" cy="156.2" rx="1.8" ry="1.2" fill="#F4EAD6" opacity="0.92"/><ellipse cx="200.8" cy="156.9" rx="1.8" ry="1.2" fill="#F4EAD6" opacity="0.92"/><ellipse cx="68.0" cy="166.9" rx="1.8" ry="1.2" fill="#F4EAD6" opacity="0.92"/><ellipse cx="76.8" cy="167.6" rx="1.8" ry="1.2" fill="#F4EAD6" opacity="0.92"/><ellipse cx="83.8" cy="165.5" rx="1.8" ry="1.2" fill="#F4EAD6" opacity="0.92"/><ellipse cx="91.4" cy="167.0" rx="1.8" ry="1.2" fill="#F4EAD6" opacity="0.92"/><ellipse cx="97.7" cy="166.9" rx="1.8" ry="1.2" fill="#F4EAD6" opacity="0.92"/><ellipse cx="106.1" cy="167.3" rx="1.8" ry="1.2" fill="#F4EAD6" opacity="0.92"/><ellipse cx="112.2" cy="167.6" rx="1.8" ry="1.2" fill="#F4EAD6" opacity="0.92"/><ellipse cx="118.5" cy="165.4" rx="1.8" ry="1.2" fill="#F4EAD6" opacity="0.92"/><ellipse cx="126.3" cy="167.5" rx="1.8" ry="1.2" fill="#F4EAD6" opacity="0.92"/><ellipse cx="133.3" cy="167.5" rx="1.8" ry="1.2" fill="#F4EAD6" opacity="0.92"/><ellipse cx="141.0" cy="165.3" rx="1.8" ry="1.2" fill="#F4EAD6" opacity="0.92"/><ellipse cx="147.9" cy="164.8" rx="1.8" ry="1.2" fill="#F4EAD6" opacity="0.92"/><ellipse cx="154.2" cy="164.7" rx="1.8" ry="1.2" fill="#F4EAD6" opacity="0.92"/><ellipse cx="162.2" cy="167.8" rx="1.8" ry="1.2" fill="#F4EAD6" opacity="0.92"/><ellipse cx="168.7" cy="164.4" rx="1.8" ry="1.2" fill="#F4EAD6" opacity="0.92"/><ellipse cx="177.7" cy="166.1" rx="1.8" ry="1.2" fill="#F4EAD6" opacity="0.92"/><ellipse cx="184.9" cy="165.1" rx="1.8" ry="1.2" fill="#F4EAD6" opacity="0.92"/><ellipse cx="192.7" cy="167.2" rx="1.8" ry="1.2" fill="#F4EAD6" opacity="0.92"/><ellipse cx="200.0" cy="165.7" rx="1.8" ry="1.2" fill="#F4EAD6" opacity="0.92"/><ellipse cx="206.2" cy="167.5" rx="1.8" ry="1.2" fill="#F4EAD6" opacity="0.92"/><ellipse cx="212.3" cy="166.0" rx="1.8" ry="1.2" fill="#F4EAD6" opacity="0.92"/><ellipse cx="70.7" cy="174.8" rx="1.8" ry="1.2" fill="#F4EAD6" opacity="0.92"/><ellipse cx="79.5" cy="174.5" rx="1.8" ry="1.2" fill="#F4EAD6" opacity="0.92"/><ellipse cx="87.9" cy="172.6" rx="1.8" ry="1.2" fill="#F4EAD6" opacity="0.92"/><ellipse cx="95.2" cy="172.7" rx="1.8" ry="1.2" fill="#F4EAD6" opacity="0.92"/><ellipse cx="103.7" cy="173.3" rx="1.8" ry="1.2" fill="#F4EAD6" opacity="0.92"/><ellipse cx="111.1" cy="175.8" rx="1.8" ry="1.2" fill="#F4EAD6" opacity="0.92"/><ellipse cx="119.6" cy="175.7" rx="1.8" ry="1.2" fill="#F4EAD6" opacity="0.92"/><ellipse cx="127.0" cy="174.0" rx="1.8" ry="1.2" fill="#F4EAD6" opacity="0.92"/><ellipse cx="135.2" cy="173.9" rx="1.8" ry="1.2" fill="#F4EAD6" opacity="0.92"/><ellipse cx="142.0" cy="173.7" rx="1.8" ry="1.2" fill="#F4EAD6" opacity="0.92"/><ellipse cx="148.5" cy="173.6" rx="1.8" ry="1.2" fill="#F4EAD6" opacity="0.92"/><ellipse cx="157.4" cy="175.7" rx="1.8" ry="1.2" fill="#F4EAD6" opacity="0.92"/><ellipse cx="165.3" cy="174.0" rx="1.8" ry="1.2" fill="#F4EAD6" opacity="0.92"/><ellipse cx="172.3" cy="172.5" rx="1.8" ry="1.2" fill="#F4EAD6" opacity="0.92"/><ellipse cx="179.2" cy="175.0" rx="1.8" ry="1.2" fill="#F4EAD6" opacity="0.92"/><ellipse cx="187.8" cy="173.5" rx="1.8" ry="1.2" fill="#F4EAD6" opacity="0.92"/><ellipse cx="196.1" cy="175.0" rx="1.8" ry="1.2" fill="#F4EAD6" opacity="0.92"/><ellipse cx="204.2" cy="174.6" rx="1.8" ry="1.2" fill="#F4EAD6" opacity="0.92"/><ellipse cx="212.5" cy="173.5" rx="1.8" ry="1.2" fill="#F4EAD6" opacity="0.92"/><ellipse cx="79.4" cy="181.9" rx="1.8" ry="1.2" fill="#F4EAD6" opacity="0.92"/><ellipse cx="87.7" cy="182.7" rx="1.8" ry="1.2" fill="#F4EAD6" opacity="0.92"/><ellipse cx="94.6" cy="183.6" rx="1.8" ry="1.2" fill="#F4EAD6" opacity="0.92"/><ellipse cx="102.5" cy="182.3" rx="1.8" ry="1.2" fill="#F4EAD6" opacity="0.92"/><ellipse cx="108.6" cy="182.2" rx="1.8" ry="1.2" fill="#F4EAD6" opacity="0.92"/><ellipse cx="115.3" cy="182.6" rx="1.8" ry="1.2" fill="#F4EAD6" opacity="0.92"/><ellipse cx="122.7" cy="183.1" rx="1.8" ry="1.2" fill="#F4EAD6" opacity="0.92"/><ellipse cx="130.7" cy="183.1" rx="1.8" ry="1.2" fill="#F4EAD6" opacity="0.92"/><ellipse cx="137.7" cy="182.5" rx="1.8" ry="1.2" fill="#F4EAD6" opacity="0.92"/><ellipse cx="145.9" cy="183.2" rx="1.8" ry="1.2" fill="#F4EAD6" opacity="0.92"/><ellipse cx="153.0" cy="183.2" rx="1.8" ry="1.2" fill="#F4EAD6" opacity="0.92"/><ellipse cx="161.6" cy="182.7" rx="1.8" ry="1.2" fill="#F4EAD6" opacity="0.92"/><ellipse cx="170.5" cy="183.6" rx="1.8" ry="1.2" fill="#F4EAD6" opacity="0.92"/><ellipse cx="178.1" cy="182.1" rx="1.8" ry="1.2" fill="#F4EAD6" opacity="0.92"/><ellipse cx="184.6" cy="183.2" rx="1.8" ry="1.2" fill="#F4EAD6" opacity="0.92"/><ellipse cx="193.4" cy="181.9" rx="1.8" ry="1.2" fill="#F4EAD6" opacity="0.92"/><ellipse cx="201.4" cy="182.8" rx="1.8" ry="1.2" fill="#F4EAD6" opacity="0.92"/><ellipse cx="90.9" cy="191.0" rx="1.8" ry="1.2" fill="#F4EAD6" opacity="0.92"/><ellipse cx="98.6" cy="190.6" rx="1.8" ry="1.2" fill="#F4EAD6" opacity="0.92"/><ellipse cx="105.9" cy="190.4" rx="1.8" ry="1.2" fill="#F4EAD6" opacity="0.92"/><ellipse cx="114.2" cy="190.5" rx="1.8" ry="1.2" fill="#F4EAD6" opacity="0.92"/><ellipse cx="122.3" cy="188.3" rx="1.8" ry="1.2" fill="#F4EAD6" opacity="0.92"/><ellipse cx="128.8" cy="189.8" rx="1.8" ry="1.2" fill="#F4EAD6" opacity="0.92"/><ellipse cx="136.8" cy="189.0" rx="1.8" ry="1.2" fill="#F4EAD6" opacity="0.92"/><ellipse cx="144.8" cy="190.5" rx="1.8" ry="1.2" fill="#F4EAD6" opacity="0.92"/><ellipse cx="151.0" cy="189.9" rx="1.8" ry="1.2" fill="#F4EAD6" opacity="0.92"/><ellipse cx="157.6" cy="188.4" rx="1.8" ry="1.2" fill="#F4EAD6" opacity="0.92"/><ellipse cx="164.0" cy="189.3" rx="1.8" ry="1.2" fill="#F4EAD6" opacity="0.92"/><ellipse cx="170.6" cy="188.9" rx="1.8" ry="1.2" fill="#F4EAD6" opacity="0.92"/><ellipse cx="176.7" cy="189.9" rx="1.8" ry="1.2" fill="#F4EAD6" opacity="0.92"/><ellipse cx="183.8" cy="190.4" rx="1.8" ry="1.2" fill="#F4EAD6" opacity="0.92"/><ellipse cx="191.6" cy="189.1" rx="1.8" ry="1.2" fill="#F4EAD6" opacity="0.92"/><ellipse cx="118.0" cy="196.7" rx="1.8" ry="1.2" fill="#F4EAD6" opacity="0.92"/><ellipse cx="124.8" cy="196.7" rx="1.8" ry="1.2" fill="#F4EAD6" opacity="0.92"/><ellipse cx="131.2" cy="198.2" rx="1.8" ry="1.2" fill="#F4EAD6" opacity="0.92"/><ellipse cx="138.3" cy="195.3" rx="1.8" ry="1.2" fill="#F4EAD6" opacity="0.92"/><ellipse cx="146.1" cy="195.5" rx="1.8" ry="1.2" fill="#F4EAD6" opacity="0.92"/><ellipse cx="153.8" cy="196.4" rx="1.8" ry="1.2" fill="#F4EAD6" opacity="0.92"/><ellipse cx="161.5" cy="198.6" rx="1.8" ry="1.2" fill="#F4EAD6" opacity="0.92"/><ellipse cx="170.0" cy="196.7" rx="1.8" ry="1.2" fill="#F4EAD6" opacity="0.92"/><ellipse cx="178.4" cy="197.5" rx="1.8" ry="1.2" fill="#F4EAD6" opacity="0.92"/><ellipse cx="185.5" cy="195.7" rx="1.8" ry="1.2" fill="#F4EAD6" opacity="0.92"/>
<!-- neck front dark -->
<path d="M240 166 C234 180 222 192 212 196 L206 190 C220 182 228 172 232 160 Z" fill="#3A1A08"/>
<!-- throat -->
<path d="M228 143 C234 150 240 151 246 145 L244 160 C238 166 232 165 229 158 Z" fill="#F0E8DA"/>
<!-- head -->
<path d="M226 112 C232 106 242 106 249 112 C250 124 248 134 244 141 C241 146 233 146 230 141 C226 134 224 124 226 112 Z" fill="#A88060"/>
<path d="M227 114 C233 110 243 110 248 114 C244 120 240 126 237.5 130 C235 126 231 120 227 114 Z" fill="#5E4838"/>
<path d="M228 122 C231 128 235 132 237.5 134 C240 132 244 128 247 122 C248 132 245 142 237.5 146 C230 142 227 132 228 122 Z" fill="#D8BC94"/>
<ellipse cx="237.5" cy="140" rx="4.2" ry="3.3" fill="#3A2A22"/>
<path d="M227 116 C220 118 212 114 211 106 C218 104 225 107 229 112 Z" fill="#6A4A30"/>
<path d="M248 116 C256 119 265 115 266 107 C259 104 252 107 247 112 Z" fill="#6A4A30"/>
<path d="M225 113 C220 113 215 110 214 107 C219 107 223 109 226 111 Z" fill="#9A7A5A" opacity="0.7"/>
<path d="M250 113 C255 113 261 111 263 108 C258 108 253 109 249 111 Z" fill="#9A7A5A" opacity="0.7"/>
<circle cx="229.5" cy="125" r="1.6" fill="#1A1008"/><circle cx="245.5" cy="126" r="1.6" fill="#1A1008"/>
</g>
<path d="M243.5 297.4 Q238.8 262.6 231.8 227.8" stroke="#A88450" stroke-width="0.71" fill="none" opacity="0.7"/><path d="M156.6 256.5 Q156.0 239.2 155.1 221.9" stroke="#C8A468" stroke-width="0.81" fill="none" opacity="0.7"/><path d="M238.4 255.3 Q238.3 218.3 238.3 181.2" stroke="#D8B878" stroke-width="0.76" fill="none" opacity="0.7"/><path d="M201.5 267.9 Q204.7 254.0 209.5 240.1" stroke="#A88450" stroke-width="0.83" fill="none" opacity="0.7"/><path d="M176.6 298.5 Q179.5 277.0 183.9 255.4" stroke="#A88450" stroke-width="0.98" fill="none" opacity="0.7"/><path d="M101.9 298.7 Q105.4 271.9 110.7 245.1" stroke="#C8A468" stroke-width="0.86" fill="none" opacity="0.7"/><path d="M169.9 272.4 Q166.4 243.8 161.0 215.3" stroke="#C8A468" stroke-width="0.77" fill="none" opacity="0.7"/><path d="M188.1 276.0 Q183.5 248.9 176.4 221.9" stroke="#E0C48A" stroke-width="0.52" fill="none" opacity="0.7"/><path d="M100.6 278.6 Q98.7 245.6 95.9 212.6" stroke="#A88450" stroke-width="0.95" fill="none" opacity="0.7"/><path d="M159.3 294.7 Q156.1 270.9 151.4 247.0" stroke="#C8A468" stroke-width="0.55" fill="none" opacity="0.7"/><path d="M212.4 285.4 Q209.5 252.1 205.1 218.9" stroke="#C8A468" stroke-width="0.96" fill="none" opacity="0.7"/><path d="M170.4 297.3 Q175.7 280.6 183.7 263.9" stroke="#D8B878" stroke-width="0.82" fill="none" opacity="0.7"/><path d="M126.5 258.1 Q121.1 240.0 112.9 221.8" stroke="#C8A468" stroke-width="0.90" fill="none" opacity="0.7"/><path d="M248.7 276.9 Q251.5 239.7 255.7 202.5" stroke="#A88450" stroke-width="0.51" fill="none" opacity="0.7"/><path d="M213.4 274.5 Q210.8 261.1 206.8 247.7" stroke="#C8A468" stroke-width="0.88" fill="none" opacity="0.7"/><path d="M141.0 264.8 Q141.6 250.0 142.6 235.2" stroke="#C8A468" stroke-width="0.85" fill="none" opacity="0.7"/><path d="M162.8 261.9 Q159.0 246.9 153.4 231.9" stroke="#D8B878" stroke-width="0.72" fill="none" opacity="0.7"/><path d="M115.4 294.6 Q119.8 261.8 126.5 228.9" stroke="#E0C48A" stroke-width="0.53" fill="none" opacity="0.7"/><path d="M251.3 294.9 Q251.8 263.7 252.6 232.6" stroke="#E0C48A" stroke-width="0.70" fill="none" opacity="0.7"/><path d="M209.8 277.9 Q213.4 251.6 218.9 225.4" stroke="#D8B878" stroke-width="0.51" fill="none" opacity="0.7"/><path d="M70.6 298.2 Q69.8 267.5 68.7 236.8" stroke="#C8A468" stroke-width="0.98" fill="none" opacity="0.7"/><path d="M57.3 278.1 Q54.3 252.1 49.9 226.0" stroke="#E0C48A" stroke-width="0.90" fill="none" opacity="0.7"/><path d="M257.4 263.6 Q252.1 242.7 244.1 221.7" stroke="#C8A468" stroke-width="0.87" fill="none" opacity="0.7"/><path d="M128.4 289.7 Q130.1 276.4 132.7 263.2" stroke="#E0C48A" stroke-width="0.98" fill="none" opacity="0.7"/><path d="M132.4 263.9 Q137.9 236.4 146.2 209.0" stroke="#C8A468" stroke-width="0.76" fill="none" opacity="0.7"/><path d="M105.5 294.9 Q109.7 280.3 116.1 265.6" stroke="#E0C48A" stroke-width="0.69" fill="none" opacity="0.7"/><path d="M43.9 272.8 Q46.0 250.0 49.0 227.2" stroke="#E0C48A" stroke-width="0.67" fill="none" opacity="0.7"/><path d="M106.5 298.0 Q105.2 277.0 103.3 255.9" stroke="#E0C48A" stroke-width="0.94" fill="none" opacity="0.7"/><path d="M186.9 287.8 Q187.4 253.2 188.0 218.6" stroke="#D8B878" stroke-width="0.69" fill="none" opacity="0.7"/><path d="M236.5 299.4 Q235.1 283.2 232.9 267.1" stroke="#E0C48A" stroke-width="0.99" fill="none" opacity="0.7"/><path d="M101.1 288.5 Q95.9 275.8 88.1 263.1" stroke="#D8B878" stroke-width="0.62" fill="none" opacity="0.7"/><path d="M256.2 281.7 Q259.6 268.1 264.8 254.6" stroke="#A88450" stroke-width="0.60" fill="none" opacity="0.7"/><path d="M164.4 281.1 Q160.8 249.1 155.4 217.1" stroke="#E0C48A" stroke-width="0.81" fill="none" opacity="0.7"/><path d="M119.5 299.3 Q121.7 271.2 125.0 243.1" stroke="#C8A468" stroke-width="0.52" fill="none" opacity="0.7"/><path d="M66.5 287.3 Q62.4 250.1 56.3 213.0" stroke="#C8A468" stroke-width="0.97" fill="none" opacity="0.7"/><path d="M104.8 294.8 Q108.1 275.0 113.1 255.1" stroke="#D8B878" stroke-width="0.91" fill="none" opacity="0.7"/><path d="M172.6 279.6 Q168.5 258.9 162.4 238.2" stroke="#D8B878" stroke-width="0.58" fill="none" opacity="0.7"/><path d="M87.1 298.3 Q90.0 261.0 94.3 223.7" stroke="#C8A468" stroke-width="0.77" fill="none" opacity="0.7"/><path d="M229.0 271.8 Q230.7 250.3 233.2 228.7" stroke="#A88450" stroke-width="0.73" fill="none" opacity="0.7"/><path d="M185.1 297.8 Q183.5 269.3 181.1 240.9" stroke="#A88450" stroke-width="0.92" fill="none" opacity="0.7"/><path d="M48.7 269.8 Q51.6 239.1 55.9 208.5" stroke="#C8A468" stroke-width="0.61" fill="none" opacity="0.7"/><path d="M129.5 252.9 Q128.7 232.5 127.5 212.1" stroke="#C8A468" stroke-width="0.79" fill="none" opacity="0.7"/><path d="M131.2 262.3 Q133.1 241.9 135.9 221.5" stroke="#E0C48A" stroke-width="0.91" fill="none" opacity="0.7"/><path d="M127.7 268.4 Q122.3 243.4 114.2 218.5" stroke="#E0C48A" stroke-width="0.91" fill="none" opacity="0.7"/><path d="M80.0 272.0 Q83.0 254.8 87.6 237.5" stroke="#D8B878" stroke-width="0.73" fill="none" opacity="0.7"/>
</g>
</symbol></svg>
<svg class="a" style="left:873px;top:422px" width="448" height="297" viewBox="0 0 448 297"><use href="#deer" x="0" y="0" width="448" height="297"/></svg>
<svg class="a" style="left:1404px;top:262px;" width="31" height="31" viewBox="0 0 31 31"><g transform="translate(0,0) scale(1.0)">
<rect x="0" y="0" width="30" height="21.8" rx="1.6" fill="#000"/>
<rect x="4.1" y="11.1" width="5.6" height="7.6" fill="#FFF"/>
<rect x="12.25" y="7.5" width="5.6" height="11.2" fill="#FFF"/>
<rect x="20.4" y="3.7" width="6.2" height="15" fill="#FFF"/>
<path d="M11.6 21.5 L8.4 30 M15 21.5 V30 M18.5 21.5 L21.8 30" stroke="#000" stroke-width="1.9"/>
</g></svg>
<div class="t" style="left:1443px;top:266.00px;font-size:22.88px;line-height:22.88px;color:#111111;letter-spacing:0.21px;font-weight:bold;">MagicSlides</div>
<div class="a" style="left:44px;top:196px;width:198px;height:75px;background:#C6C4C2"></div>
<div class="a" style="left:45px;top:196px;width:196px;height:74px;background:#FFFFFF"></div>
<svg class="a" style="left:89px;top:207.3px" width="110" height="8"><text x="0" y="5.3" font-family="Liberation Sans" font-size="7.2" font-weight="bold" font-style="normal" textLength="108" lengthAdjust="spacingAndGlyphs" fill="#000010" >Professional Presentations in Seconds with AI</text></svg>
<svg class="a" style="left:71px;top:216.5px" width="81" height="8"><text x="0" y="5.3" font-family="Liberation Sans" font-size="3.6" font-weight="normal" font-style="normal" textLength="79" lengthAdjust="spacingAndGlyphs" fill="#666" >Never start from a blank slide again.</text></svg>
<svg class="a" style="left:71px;top:224.5px" width="100" height="8"><text x="0" y="5.3" font-family="Liberation Sans" font-size="3.6" font-weight="normal" font-style="normal" textLength="98" lengthAdjust="spacingAndGlyphs" fill="#555" >• Create presentation from text, YouTube, pdf</text></svg>
<svg class="a" style="left:71px;top:229.5px" width="58" height="8"><text x="0" y="5.3" font-family="Liberation Sans" font-size="3.6" font-weight="normal" font-style="normal" textLength="56" lengthAdjust="spacingAndGlyphs" fill="#555" >• No Credit Card Required</text></svg>
<svg class="a" style="left:71px;top:235px" width="42" height="8"><text x="0" y="5.3" font-family="Liberation Sans" font-size="3.6" font-weight="normal" font-style="normal" textLength="40" lengthAdjust="spacingAndGlyphs" fill="#555" >• No need to learn</text></svg>
<svg class="a" style="left:112px;top:235px" width="21" height="8"><text x="0" y="5.3" font-family="Liberation Sans" font-size="3.6" font-weight="normal" font-style="normal" textLength="19" lengthAdjust="spacingAndGlyphs" fill="#2050C0" >new tool</text></svg>
<div class="a" style="left:112px;top:241px;width:19px;height:0.8px;background:#2050C0"></div>
<div class="t" style="left:15px;top:293.00px;font-size:18.2px;line-height:18.2px;color:#444444;">5</div>
<div class="a" style="left:44px;top:296px;width:198px;height:112px;background:#C6C4C2"></div>
<div class="a" style="left:45px;top:297px;width:196px;height:110px;background:#FFFFFF"></div>
<svg class="a" style="left:190px;top:304px;" width="29" height="8" viewBox="0 0 29 8"><g transform="translate(0,0.3) scale(0.19)">
<rect x="0" y="0" width="30" height="21.8" rx="1.6" fill="#000"/>
<rect x="4.1" y="11.1" width="5.6" height="7.6" fill="#FFF"/>
<rect x="12.25" y="7.5" width="5.6" height="11.2" fill="#FFF"/>
<rect x="20.4" y="3.7" width="6.2" height="15" fill="#FFF"/>
<path d="M11.6 21.5 L8.4 30 M15 21.5 V30 M18.5 21.5 L21.8 30" stroke="#000" stroke-width="1.9"/>
</g><text x="7.2" y="5.3" font-family="Liberation Sans" font-weight="bold" font-size="5" textLength="19.5" lengthAdjust="spacingAndGlyphs" fill="#111">MagicSlides</text></svg>
<svg class="a" style="left:105px;top:331px" width="73" height="49" viewBox="0 0 73 49">
<defs><filter id="gb"><feGaussianBlur stdDeviation="1.5"/></filter>
<filter id="noise5" x="0" y="0" width="100%" height="100%"><feTurbulence type="fractalNoise" baseFrequency="0.35" numOctaves="2" seed="4"/><feColorMatrix type="matrix" values="0 0 0 0 0.5  0 0 0 0 0.5  0 0 0 0 0.5  0 0 0 1.6 -0.55"/></filter>
<clipPath id="c5"><rect width="73" height="49"/></clipPath></defs>
<g clip-path="url(#c5)">
<rect width="73" height="49" fill="#C4C4C4"/>
<g filter="url(#gb)"><rect x="-5" y="-5" width="83" height="12" fill="#9A9A9A"/><ellipse cx="66" cy="6" rx="10" ry="8" fill="#6A6A6A"/><ellipse cx="58" cy="14" rx="12" ry="5" fill="#8A8A8A"/><ellipse cx="18" cy="22" rx="22" ry="8" fill="#D6D6D6"/><ellipse cx="55" cy="32" rx="18" ry="10" fill="#D0D0D0"/><ellipse cx="30" cy="44" rx="30" ry="6" fill="#BDBDBD"/></g>
<path d="M9 29 Q10 24 16 23.5 Q28 23 38 25 L40 27 Q36 33 31 35 Q22 37 15 35 Q11 33 9 29 Z" fill="#4A4A4A"/>
<path d="M8.5 27 Q7 32 9 35" stroke="#444" stroke-width="1.5" fill="none"/>
<path d="M13 34 Q10 40 11 44 M17 35 Q15 40 17 44 M30 35 L29 44 M33 35 L33 43" stroke="#4A4A4A" stroke-width="1.6" fill="none"/>
<rect width="73" height="49" filter="url(#noise5)" opacity="0.9"/>
<linearGradient id="ig5" x1="0" y1="0" x2="0" y2="1"><stop offset="0" stop-color="#8A8A40"/><stop offset="0.45" stop-color="#9E8A44"/><stop offset="1" stop-color="#B08844"/></linearGradient>
<rect x="26" y="5" width="25" height="22" fill="url(#ig5)"/>
<path d="M35 22 Q33 15 32 8 M39 22 Q43 15 45 8" stroke="#6E4A28" stroke-width="1" fill="none"/>
<path d="M34.5 20 Q37 19 40 20 L38.5 26 L36 26 Z" fill="#5E3818"/>
<path d="M26 24 L40 24 L38 27 L26 27 Z" fill="#8A4A1E"/>
</g>
</svg>
<div class="t" style="left:15px;top:429.00px;font-size:18.2px;line-height:18.2px;color:#B7472A;">6</div>
<div class="a" style="left:41px;top:430px;width:204px;height:118px;background:#B7472A"></div>
<div class="a" style="left:44px;top:433px;width:198px;height:112px;background:#FFFFFF"></div>
<svg class="a" style="left:189px;top:440px;" width="29" height="8" viewBox="0 0 29 8"><g transform="translate(0,0.3) scale(0.19)">
<rect x="0" y="0" width="30" height="21.8" rx="1.6" fill="#000"/>
<rect x="4.1" y="11.1" width="5.6" height="7.6" fill="#FFF"/>
<rect x="12.25" y="7.5" width="5.6" height="11.2" fill="#FFF"/>
<rect x="20.4" y="3.7" width="6.2" height="15" fill="#FFF"/>
<path d="M11.6 21.5 L8.4 30 M15 21.5 V30 M18.5 21.5 L21.8 30" stroke="#000" stroke-width="1.9"/>
</g><text x="7.2" y="5.3" font-family="Liberation Sans" font-weight="bold" font-size="5" textLength="19.5" lengthAdjust="spacingAndGlyphs" fill="#111">MagicSlides</text></svg>
<svg class="a" style="left:109px;top:467px" width="68" height="45" viewBox="0 0 448 297"><use href="#deer" x="0" y="0" width="448" height="297"/></svg>
<div class="t" style="left:15px;top:567.00px;font-size:18.2px;line-height:18.2px;color:#444444;">7</div>
<div class="a" style="left:44px;top:570px;width:198px;height:112px;background:#C6C4C2"></div>
<div class="a" style="left:45px;top:571px;width:196px;height:110px;background:#FFFFFF"></div>
<svg class="a" style="left:190px;top:577px;" width="29" height="8" viewBox="0 0 29 8"><g transform="translate(0,0.3) scale(0.19)">
<rect x="0" y="0" width="30" height="21.8" rx="1.6" fill="#000"/>
<rect x="4.1" y="11.1" width="5.6" height="7.6" fill="#FFF"/>
<rect x="12.25" y="7.5" width="5.6" height="11.2" fill="#FFF"/>
<rect x="20.4" y="3.7" width="6.2" height="15" fill="#FFF"/>
<path d="M11.6 21.5 L8.4 30 M15 21.5 V30 M18.5 21.5 L21.8 30" stroke="#000" stroke-width="1.9"/>
</g><text x="7.2" y="5.3" font-family="Liberation Sans" font-weight="bold" font-size="5" textLength="19.5" lengthAdjust="spacingAndGlyphs" fill="#111">MagicSlides</text></svg>
<div class="t" style="left:15px;top:704.00px;font-size:18.2px;line-height:18.2px;color:#444444;">8</div>
<div class="a" style="left:44px;top:707px;width:198px;height:112px;background:#C6C4C2"></div>
<div class="a" style="left:45px;top:708px;width:196px;height:110px;background:#FFFFFF"></div>
<svg class="a" style="left:189px;top:715px;" width="29" height="8" viewBox="0 0 29 8"><g transform="translate(0,0.3) scale(0.19)">
<rect x="0" y="0" width="30" height="21.8" rx="1.6" fill="#000"/>
<rect x="4.1" y="11.1" width="5.6" height="7.6" fill="#FFF"/>
<rect x="12.25" y="7.5" width="5.6" height="11.2" fill="#FFF"/>
<rect x="20.4" y="3.7" width="6.2" height="15" fill="#FFF"/>
<path d="M11.6 21.5 L8.4 30 M15 21.5 V30 M18.5 21.5 L21.8 30" stroke="#000" stroke-width="1.9"/>
</g><text x="7.2" y="5.3" font-family="Liberation Sans" font-weight="bold" font-size="5" textLength="19.5" lengthAdjust="spacingAndGlyphs" fill="#111">MagicSlides</text></svg>
<svg class="a" style="left:117px;top:715.7px" width="38" height="8"><text x="0" y="5.3" font-family="Liberation Sans" font-size="3.6" font-weight="normal" font-style="italic" textLength="36" lengthAdjust="spacingAndGlyphs" fill="#666" >End of the Presentation</text></svg>
<svg class="a" style="left:69px;top:721.6px" width="65" height="8"><text x="0" y="5.3" font-family="Liberation Sans" font-size="3.6" font-weight="normal" font-style="normal" textLength="63" lengthAdjust="spacingAndGlyphs" fill="#555" >Marketing Team Meeting – Key Takeaways</text></svg>
<svg class="a" style="left:69px;top:725.6px" width="31" height="8"><text x="0" y="5.3" font-family="Liberation Sans" font-size="3.6" font-weight="normal" font-style="normal" textLength="29" lengthAdjust="spacingAndGlyphs" fill="#555" >Date: July 25, 2024</text></svg>
<svg class="a" style="left:69px;top:734.7px" width="53" height="8"><text x="0" y="5.3" font-family="Liberation Sans" font-size="3.6" font-weight="normal" font-style="normal" textLength="51" lengthAdjust="spacingAndGlyphs" fill="#555" >1. Campaign Performance Review</text></svg>
<svg class="a" style="left:69px;top:739.5px" width="85" height="8"><text x="0" y="5.3" font-family="Liberation Sans" font-size="3.6" font-weight="normal" font-style="normal" textLength="83" lengthAdjust="spacingAndGlyphs" fill="#555" >- Q2 Results: 15% increase in social media engagement.</text></svg>
<svg class="a" style="left:69px;top:743.7px" width="83" height="8"><text x="0" y="5.3" font-family="Liberation Sans" font-size="3.6" font-weight="normal" font-style="normal" textLength="81" lengthAdjust="spacingAndGlyphs" fill="#555" >- Top Channels: Instagram &amp; LinkedIn with highest ROI.</text></svg>
<svg class="a" style="left:69px;top:748.7px" width="100" height="8"><text x="0" y="5.3" font-family="Liberation Sans" font-size="3.6" font-weight="normal" font-style="normal" textLength="98" lengthAdjust="spacingAndGlyphs" fill="#555" >- Customer Feedback** Positive responses to new video strategy.</text></svg>
<svg class="a" style="left:69px;top:756.6px" width="39" height="8"><text x="0" y="5.3" font-family="Liberation Sans" font-size="3.6" font-weight="normal" font-style="normal" textLength="37" lengthAdjust="spacingAndGlyphs" fill="#555" >2. Upcoming Campaigns.</text></svg>
<svg class="a" style="left:69px;top:760.8px" width="93" height="8"><text x="0" y="5.3" font-family="Liberation Sans" font-size="3.6" font-weight="normal" font-style="normal" textLength="91" lengthAdjust="spacingAndGlyphs" fill="#555" >- Q3 Focus: Targeted email campaign for customer retention.</text></svg>
<svg class="a" style="left:69px;top:765.6px" width="81" height="8"><text x="0" y="5.3" font-family="Liberation Sans" font-size="3.6" font-weight="normal" font-style="normal" textLength="79" lengthAdjust="spacingAndGlyphs" fill="#555" >- Content Calendar: Finalized Q3 themes &amp; schedule.</text></svg>
<svg class="a" style="left:69px;top:769.7px" width="111" height="8"><text x="0" y="5.3" font-family="Liberation Sans" font-size="3.6" font-weight="normal" font-style="normal" textLength="109" lengthAdjust="spacingAndGlyphs" fill="#555" >- New Partnerships: Collaborating with influencers for key demographics.</text></svg>
<svg class="a" style="left:69px;top:778.5px" width="22" height="8"><text x="0" y="5.3" font-family="Liberation Sans" font-size="3.6" font-weight="normal" font-style="normal" textLength="20" lengthAdjust="spacingAndGlyphs" fill="#555" >Action Items:</text></svg>
<svg class="a" style="left:69px;top:783.6px" width="71" height="8"><text x="0" y="5.3" font-family="Liberation Sans" font-size="3.6" font-weight="normal" font-style="normal" textLength="69" lengthAdjust="spacingAndGlyphs" fill="#555" >-   Email Campaign: Design &amp; schedule for Q3.</text></svg>
<svg class="a" style="left:69px;top:787.6px" width="94" height="8"><text x="0" y="5.3" font-family="Liberation Sans" font-size="3.6" font-weight="normal" font-style="normal" textLength="92" lengthAdjust="spacingAndGlyphs" fill="#555" >-   Influencer Outreach: Finalize agreements &amp; content briefs.</text></svg>
<svg class="a" style="left:69px;top:792.6px" width="108" height="8"><text x="0" y="5.3" font-family="Liberation Sans" font-size="3.6" font-weight="normal" font-style="normal" textLength="106" lengthAdjust="spacingAndGlyphs" fill="#555" >-   Website Redesign: Complete mobile optimization &amp; test UI features.</text></svg>
<svg class="a" style="left:69px;top:796.6px" width="28" height="8"><text x="0" y="5.3" font-family="Liberation Sans" font-size="3.6" font-weight="normal" font-style="normal" textLength="26" lengthAdjust="spacingAndGlyphs" fill="#555" >-   Next Meeting:</text></svg>
<svg class="a" style="left:69px;top:801.4px" width="35" height="8"><text x="0" y="5.3" font-family="Liberation Sans" font-size="3.6" font-weight="normal" font-style="normal" textLength="33" lengthAdjust="spacingAndGlyphs" fill="#555" >Date: August 15, 2024</text></svg>
<svg class="a" style="left:69px;top:805.5px" width="147" height="8"><text x="0" y="5.3" font-family="Liberation Sans" font-size="3.6" font-weight="normal" font-style="normal" textLength="145" lengthAdjust="spacingAndGlyphs" fill="#555" >Agenda: Q3 Campaign Progress, Mid-Year Performance Review, Customer Engagement Strategies</text></svg>
<div class="t" style="left:15px;top:840.00px;font-size:18.2px;line-height:18.2px;color:#444444;">9</div>
<svg class="a" style="left:12px;top:861px;left:12px" width="15" height="15" viewBox="0 0 15 15"><path d="M7.5 1 L9.3 5.6 L14.2 5.9 L10.4 9 L11.6 13.8 L7.5 11.1 L3.4 13.8 L4.6 9 L0.8 5.9 L5.7 5.6 Z" fill="#555"/><path d="M0.5 3.5 H3 M0.5 9.5 H2" stroke="#555" stroke-width="0.8"/></svg>
<div class="a" style="left:44px;top:844px;width:198px;height:112px;background:#C6C4C2"></div>
<div class="a" style="left:45px;top:845px;width:196px;height:110px;background:#FFFFFF"></div>
<svg class="a" style="left:189px;top:852px;" width="29" height="8" viewBox="0 0 29 8"><g transform="translate(0,0.3) scale(0.19)">
<rect x="0" y="0" width="30" height="21.8" rx="1.6" fill="#000"/>
<rect x="4.1" y="11.1" width="5.6" height="7.6" fill="#FFF"/>
<rect x="12.25" y="7.5" width="5.6" height="11.2" fill="#FFF"/>
<rect x="20.4" y="3.7" width="6.2" height="15" fill="#FFF"/>
<path d="M11.6 21.5 L8.4 30 M15 21.5 V30 M18.5 21.5 L21.8 30" stroke="#000" stroke-width="1.9"/>
</g><text x="7.2" y="5.3" font-family="Liberation Sans" font-weight="bold" font-size="5" textLength="19.5" lengthAdjust="spacingAndGlyphs" fill="#111">MagicSlides</text></svg>
<svg class="a" style="left:69.5px;top:858.6px" width="76.5" height="8"><text x="0" y="5.3" font-family="Liberation Sans" font-size="3.6" font-weight="normal" font-style="normal" textLength="74.5" lengthAdjust="spacingAndGlyphs" fill="#555" >Marketing Team Meeting – Agenda for the month</text></svg>
<svg class="a" style="left:69.5px;top:862.6px" width="30.5" height="8"><text x="0" y="5.3" font-family="Liberation Sans" font-size="3.6" font-weight="normal" font-style="normal" textLength="28.5" lengthAdjust="spacingAndGlyphs" fill="#555" >Date: July 25, 2024</text></svg>
<svg class="a" style="left:69.5px;top:871.5px" width="52.5" height="8"><text x="0" y="5.3" font-family="Liberation Sans" font-size="3.6" font-weight="normal" font-style="normal" textLength="50.5" lengthAdjust="spacingAndGlyphs" fill="#555" >1. Campaign Performance Review</text></svg>
<svg class="a" style="left:69.5px;top:876.6px" width="84.0" height="8"><text x="0" y="5.3" font-family="Liberation Sans" font-size="3.6" font-weight="normal" font-style="normal" textLength="82.0" lengthAdjust="spacingAndGlyphs" fill="#E8503A" >- Q2 Results: 15% increase in social media engagement.</text></svg>
<svg class="a" style="left:69.5px;top:880.7px" width="83.0" height="8"><text x="0" y="5.3" font-family="Liberation Sans" font-size="3.6" font-weight="normal" font-style="normal" textLength="81.0" lengthAdjust="spacingAndGlyphs" fill="#E8503A" >- Top Channels: Instagram &amp; LinkedIn with highest ROI.</text></svg>
<svg class="a" style="left:69.5px;top:885.6px" width="99.5" height="8"><text x="0" y="5.3" font-family="Liberation Sans" font-size="3.6" font-weight="normal" font-style="normal" textLength="97.5" lengthAdjust="spacingAndGlyphs" fill="#E8503A" >- Customer Feedback** Positive responses to new video strategy.</text></svg>
<svg class="a" style="left:69.5px;top:893.6px" width="38.5" height="8"><text x="0" y="5.3" font-family="Liberation Sans" font-size="3.6" font-weight="normal" font-style="normal" textLength="36.5" lengthAdjust="spacingAndGlyphs" fill="#555" >2. Upcoming Campaigns.</text></svg>
<svg class="a" style="left:69.5px;top:897.8px" width="92.0" height="8"><text x="0" y="5.3" font-family="Liberation Sans" font-size="3.6" font-weight="normal" font-style="normal" textLength="90.0" lengthAdjust="spacingAndGlyphs" fill="#E8503A" >- Q3 Focus: Targeted email campaign for customer retention.</text></svg>
<svg class="a" style="left:69.5px;top:902.6px" width="80.0" height="8"><text x="0" y="5.3" font-family="Liberation Sans" font-size="3.6" font-weight="normal" font-style="normal" textLength="78.0" lengthAdjust="spacingAndGlyphs" fill="#E8503A" >- Content Calendar: Finalized Q3 themes &amp; schedule.</text></svg>
<svg class="a" style="left:69.5px;top:906.6px" width="110.0" height="8"><text x="0" y="5.3" font-family="Liberation Sans" font-size="3.6" font-weight="normal" font-style="normal" textLength="108.0" lengthAdjust="spacingAndGlyphs" fill="#E8503A" >- New Partnerships: Collaborating with influencers for key demographics.</text></svg>
<svg class="a" style="left:69.5px;top:915.5px" width="21.5" height="8"><text x="0" y="5.3" font-family="Liberation Sans" font-size="3.6" font-weight="normal" font-style="normal" textLength="19.5" lengthAdjust="spacingAndGlyphs" fill="#555" >Action Items:</text></svg>
<svg class="a" style="left:69.5px;top:938.4px" width="34.5" height="8"><text x="0" y="5.3" font-family="Liberation Sans" font-size="3.6" font-weight="normal" font-style="normal" textLength="32.5" lengthAdjust="spacingAndGlyphs" fill="#555" >Date: August 15, 2024</text></svg>
<svg class="a" style="left:69.5px;top:942.5px" width="146.5" height="8"><text x="0" y="5.3" font-family="Liberation Sans" font-size="3.6" font-weight="normal" font-style="normal" textLength="144.5" lengthAdjust="spacingAndGlyphs" fill="#E8503A" >Agenda: Q3 Campaign Progress, Mid-Year Performance Review, Customer Engagement Strategies</text></svg>
<svg class="a" style="left:69.5px;top:920.4px" width="5.5" height="8"><text x="0" y="5.3" font-family="Liberation Sans" font-size="3.6" font-weight="normal" font-style="normal" textLength="3.5" lengthAdjust="spacingAndGlyphs" fill="#555" >-</text></svg>
<svg class="a" style="left:74px;top:920.4px" width="26" height="8"><text x="0" y="5.3" font-family="Liberation Sans" font-size="3.6" font-weight="normal" font-style="normal" textLength="24" lengthAdjust="spacingAndGlyphs" fill="#2040A0" >Email Campaign</text></svg>
<div class="a" style="left:74px;top:926.5px;width:24px;height:0.9px;background:#2050C0"></div>
<svg class="a" style="left:99px;top:920.4px" width="41" height="8"><text x="0" y="5.3" font-family="Liberation Sans" font-size="3.6" font-weight="normal" font-style="normal" textLength="39" lengthAdjust="spacingAndGlyphs" fill="#E8503A" >: Design &amp; schedule for Q3.</text></svg>
<svg class="a" style="left:69.5px;top:924.6px" width="93.5" height="8"><text x="0" y="5.3" font-family="Liberation Sans" font-size="3.6" font-weight="normal" font-style="normal" textLength="91.5" lengthAdjust="spacingAndGlyphs" fill="#E8503A" >-   Influencer Outreach: Finalize agreements &amp; content briefs.</text></svg>
<svg class="a" style="left:69.5px;top:929.5px" width="107.5" height="8"><text x="0" y="5.3" font-family="Liberation Sans" font-size="3.6" font-weight="normal" font-style="normal" textLength="105.5" lengthAdjust="spacingAndGlyphs" fill="#E8503A" >-   Website Redesign: Complete mobile optimization &amp; test UI features.</text></svg>
<svg class="a" style="left:69.5px;top:933.6px" width="27.5" height="8"><text x="0" y="5.3" font-family="Liberation Sans" font-size="3.6" font-weight="normal" font-style="normal" textLength="25.5" lengthAdjust="spacingAndGlyphs" fill="#E8503A" >-   Next Meeting:</text></svg>
<svg class="a" style="left:188px;top:892px;" width="32" height="24" viewBox="0 0 32 24"><path d="M6 8 Q6 2 12 3 Q15 0 20 2 Q25 0 27 4 Q31 5 30 10 Q32 14 28 17 Q27 22 21 21 Q17 24 12 21 Q6 22 5 17 Q1 15 2 11 Q2 8 6 8 Z" fill="#4472C4" stroke="#1F3A70" stroke-width="0.9"/></svg>
<div class="a" style="left:1900px;top:198px;width:19px;height:681px;background:#F3F3F3"></div>
<div class="a" style="left:293px;top:948px;width:1626px;height:1px;background:#C6C6C6"></div>
<div class="a" style="left:0px;top:993px;width:1919px;height:1px;background:#D5D5D5"></div>
<div class="a" style="left:0px;top:994px;width:1919px;height:22px;background:#F3F3F3"></div>
<div class="t" style="left:872.5px;top:16.00px;font-size:14.77px;line-height:14.77px;color:#FFFFFF;">MagicSlides  -  PowerPoint</div>
<div class="t" style="left:24.3px;top:55.00px;font-size:15.33px;line-height:15.33px;color:#FFFFFF;">File</div>
<div class="t" style="left:155.3px;top:56.00px;font-size:15.07px;line-height:15.07px;color:#FFFFFF;">Insert</div>
<div class="t" style="left:218.3px;top:55.00px;font-size:15.6px;line-height:15.6px;color:#FFFFFF;letter-spacing:0.07px;">Draw</div>
<div class="t" style="left:280.3px;top:55.00px;font-size:15.32px;line-height:15.32px;color:#FFFFFF;">Design</div>
<div class="t" style="left:353.3px;top:56.00px;font-size:14.77px;line-height:14.77px;color:#FFFFFF;">Transitions</div>
<div class="t" style="left:450.3px;top:55.00px;font-size:15.5px;line-height:15.5px;color:#FFFFFF;">Animations</div>
<div class="t" style="left:552.3px;top:56.00px;font-size:14.93px;line-height:14.93px;color:#FFFFFF;">Slide Show</div>
<div class="t" style="left:652.3px;top:56.00px;font-size:15.11px;line-height:15.11px;color:#FFFFFF;">Record</div>
<div class="t" style="left:726.3px;top:56.00px;font-size:14.85px;line-height:14.85px;color:#FFFFFF;">Review</div>
<div class="t" style="left:800.3px;top:55.00px;font-size:15.6px;line-height:15.6px;color:#FFFFFF;letter-spacing:0.04px;">View</div>
<div class="t" style="left:859.3px;top:55.00px;font-size:15.6px;line-height:15.6px;color:#FFFFFF;letter-spacing:0.40px;">Help</div>
<div class="t" style="left:956.3px;top:55.00px;font-size:15.45px;line-height:15.45px;color:#FFFFFF;">Tell me what you want to do</div>
<div class="t" style="left:87.3px;top:55.00px;font-size:15.6px;line-height:15.6px;color:#B7472A;letter-spacing:0.27px;">Home</div>
<svg class="a" style="left:0px;top:0px;" width="1919" height="81" viewBox="0 0 1919 81"><defs><clipPath id="c1"><circle cx="1469" cy="-5" r="65"/></clipPath>
<clipPath id="c2"><circle cx="1736.5" cy="14.5" r="57"/></clipPath>
<clipPath id="tb"><rect x="0" y="0" width="1919" height="81"/></clipPath></defs>
<g fill="#9F4229" clip-path="url(#tb)">
<rect x="1347" y="0" width="5" height="32"/><rect x="1356" y="0" width="5" height="41.5"/>
<rect x="1365" y="0" width="5" height="32"/><rect x="1373.5" y="0" width="5" height="52"/>
<rect x="1383.5" y="0" width="5" height="38"/>
<g clip-path="url(#c1)">
<rect x="1400" y="0" width="16" height="70"/><rect x="1429" y="0" width="16.5" height="70"/>
<rect x="1458" y="0" width="15.5" height="70"/>
<rect x="1484" y="0" width="3" height="70"/><rect x="1491" y="0" width="3" height="70"/>
<rect x="1497.5" y="0" width="3" height="70"/><rect x="1504.5" y="0" width="2.5" height="70"/>
<rect x="1511" y="0" width="2.5" height="70"/><rect x="1518" y="0" width="2.5" height="70"/>
<rect x="1524.5" y="0" width="2.5" height="70"/><rect x="1531" y="0" width="2.5" height="70"/>
</g>
<circle cx="1560.5" cy="10" r="17.5"/>
<circle cx="1625.5" cy="39" r="9.6"/>
<circle cx="1625.5" cy="39" r="21" fill="none" stroke="#9F4229" stroke-width="8.8"/>
<circle cx="1736.5" cy="14.5" r="66.5" fill="none" stroke="#9F4229" stroke-width="20"/>
<g clip-path="url(#c2)" stroke="#9F4229" stroke-width="5.2">
<line x1="1650" y1="-10" x2="1760" y2="100"/><line x1="1662" y1="-10" x2="1772" y2="100"/>
<line x1="1675" y1="-10" x2="1785" y2="100"/><line x1="1688" y1="-10" x2="1798" y2="100"/>
</g>
<g stroke="#9F4229" stroke-width="6.2">
<line x1="1827" y1="38" x2="1865" y2="-3"/><line x1="1847" y1="38.7" x2="1886" y2="-3"/>
<line x1="1833.5" y1="67" x2="1899" y2="-3"/><line x1="1858.5" y1="62" x2="1922" y2="-6"/>
</g></g></svg>
<div class="t" style="left:1591px;top:15.00px;font-size:13.5px;line-height:13.5px;color:#FFFFFF;">Ajay Sai</div>
<svg class="a" style="left:1647px;top:6px;" width="30" height="30" viewBox="0 0 30 30"><circle cx="15" cy="15" r="14.7" fill="#D4D4D4"/><text x="15" y="20" text-anchor="middle" font-family="Liberation Sans" font-size="13.5" fill="#5E6670">AS</text></svg>
<svg class="a" style="left:1710px;top:12px;" width="20" height="15" viewBox="0 0 20 15"><rect x="1.5" y="1.5" width="16" height="12" fill="none" stroke="#FFFFFF" stroke-width="1.3"/><rect x="1" y="1" width="17" height="2.2" fill="#FFFFFF"/><path d="M9.5 12 V5.5 M6.5 8.5 L9.5 5.5 L12.5 8.5" stroke="#FFFFFF" stroke-width="1.3" fill="none"/></svg>
<div class="a" style="left:1771px;top:17px;width:13px;height:1.4px;background:#FFFFFF"></div>
<svg class="a" style="left:1826px;top:13px;" width="16" height="14" viewBox="0 0 16 14"><rect x="1.2" y="4" width="9.5" height="9.3" rx="1.5" fill="none" stroke="#FFFFFF" stroke-width="1.3"/><path d="M4 3.5 V2.5 Q4 1 5.5 1 H12 Q13.6 1 13.6 2.5 V9.5 Q13.6 11 12 11" fill="none" stroke="#FFFFFF" stroke-width="1.3"/></svg>
<svg class="a" style="left:1884px;top:12px;" width="15" height="15" viewBox="0 0 15 15"><path d="M1 1 L14 14 M14 1 L1 14" stroke="#FFFFFF" stroke-width="1.4"/></svg>
<svg class="a" style="left:1881px;top:53px;" width="21" height="19" viewBox="0 0 21 19"><path d="M1.5 1.5 H19 V13 H8 L4.5 17 V13 H1.5 Z" fill="none" stroke="#FFFFFF" stroke-width="1.3" stroke-linejoin="miter"/></svg>
<svg class="a" style="left:24px;top:9px;" width="24" height="22" viewBox="0 0 24 22"><path d="M8 17 H2.5 V2.5 H17.5 V6" fill="none" stroke="#FFFFFF" stroke-width="1.6"/><path d="M10.5 14 A5.5 5.5 0 0 1 20 10.5" fill="none" stroke="#FFFFFF" stroke-width="1.6"/><path d="M20.5 7 V11.5 H16" fill="none" stroke="#FFFFFF" stroke-width="1.5"/><path d="M20.5 16 A5.5 5.5 0 0 1 11 19.5" fill="none" stroke="#FFFFFF" stroke-width="1.6"/><path d="M10.5 22 V17.5 H15" fill="none" stroke="#FFFFFF" stroke-width="1.5"/></svg>
<svg class="a" style="left:60px;top:12px;" width="21" height="18" viewBox="0 0 21 18"><path d="M2.5 6.5 H11 A6 6 0 0 1 17 12.5 V17" fill="none" stroke="#FFFFFF" stroke-width="2"/><path d="M7 2 L2.5 6.5 L7 11" fill="none" stroke="#FFFFFF" stroke-width="2"/></svg>
<svg class="a" style="left:87px;top:16px;" width="9" height="7" viewBox="0 0 9 7"><path d="M1 1.5 L4.5 5 L8 1.5" fill="none" stroke="#FFFFFF" stroke-width="1.2"/></svg>
<svg class="a" style="left:109px;top:11px;" width="19" height="19" viewBox="0 0 19 19"><path d="M11.5 3.2 A7 7 0 1 0 16 8.5" fill="none" stroke="#E97A61" stroke-width="2.4"/><path d="M9.5 0.5 L13.5 3.5 L10 7.5" fill="none" stroke="#E97A61" stroke-width="2.2"/></svg>
<svg class="a" style="left:142px;top:10px;" width="23" height="21" viewBox="0 0 23 21"><rect x="0.5" y="1" width="20" height="2" fill="#FFFFFF"/><path d="M2.5 3 V15 H10" fill="none" stroke="#FFFFFF" stroke-width="1.4"/><path d="M5 7 H10 M5 10 H9" stroke="#FFFFFF" stroke-width="1.3"/><circle cx="15.5" cy="11" r="5" fill="none" stroke="#FFFFFF" stroke-width="1.4"/><path d="M14 8.3 V13.7 L18 11 Z" fill="#FFFFFF"/><path d="M7 19.5 H14 L12 16.5 H9 Z" fill="#FFFFFF"/></svg>
<svg class="a" style="left:184px;top:18px;" width="11" height="8" viewBox="0 0 11 8"><rect x="1.5" y="0.5" width="8" height="1.3" fill="#FFFFFF"/><path d="M1.5 3.5 H9.5 L5.5 7.5 Z" fill="#FFFFFF"/></svg>
<svg class="a" style="left:923px;top:51px;" width="20" height="22" viewBox="0 0 20 22"><path d="M6 15.5 Q6 12.5 4 10.5 A7 7 0 1 1 16 10.5 Q14 12.5 14 15.5 Z" fill="none" stroke="#FFFFFF" stroke-width="1.4"/><path d="M6.5 18 H13.5 M7.5 20.5 H12.5" stroke="#FFFFFF" stroke-width="1.4"/></svg>
<div class="a" style="left:267px;top:198px;width:19px;height:19px;background:#FFFFFF;border:1px solid #8A8A8A;box-sizing:border-box"></div>
<svg class="a" style="left:272px;top:204px;" width="9" height="6" viewBox="0 0 9 6"><path d="M0 5.5 L4.5 0.5 L9 5.5 Z" fill="#1F1F1F"/></svg>
<div class="a" style="left:267px;top:498px;width:19px;height:474px;background:#FFFFFF;border:1px solid #8A8A8A;box-sizing:border-box"></div>
<div class="a" style="left:267px;top:972px;width:19px;height:19px;background:#FFFFFF;border:1px solid #8A8A8A;box-sizing:border-box"></div>
<svg class="a" style="left:272px;top:979px;" width="9" height="6" viewBox="0 0 9 6"><path d="M0 0.5 L4.5 5.5 L9 0.5 Z" fill="#1F1F1F"/></svg>
<div class="a" style="left:1900px;top:198px;width:19px;height:19px;background:#FFFFFF;border:1px solid #8A8A8A;box-sizing:border-box"></div>
<svg class="a" style="left:1905px;top:204px;" width="9" height="6" viewBox="0 0 9 6"><path d="M0 5.5 L4.5 0.5 L9 5.5 Z" fill="#1F1F1F"/></svg>
<div class="a" style="left:1900px;top:575px;width:19px;height:71px;background:#FFFFFF;border:1px solid #8A8A8A;box-sizing:border-box"></div>
<div class="a" style="left:1900px;top:861px;width:19px;height:19px;background:#FFFFFF;border:1px solid #8A8A8A;box-sizing:border-box"></div>
<svg class="a" style="left:1905px;top:868px;" width="9" height="6" viewBox="0 0 9 6"><path d="M0 0.5 L4.5 5.5 L9 0.5 Z" fill="#1F1F1F"/></svg>
<svg class="a" style="left:1902px;top:883px;" width="14" height="38" viewBox="0 0 14 38"><path d="M7 1 L12.5 7.5 H9.5 L12.5 11 V16 H1.5 V11 L4.5 7.5 H1.5 Z" fill="#6E6E6E"/><path d="M1.5 22 H12.5 V27 L9.5 30.5 H12.5 L7 37 L1.5 30.5 H4.5 L1.5 27 Z" fill="#6E6E6E"/></svg>
<div class="t" style="left:305px;top:960.00px;font-size:20.5px;line-height:20.5px;color:#555555;transform:scaleX(0.8960);transform-origin:0 0;">Click to add notes</div>
<div class="t" style="left:14.5px;top:1001.00px;font-size:13.49px;line-height:13.49px;color:#444444;">Slide 6 of 9</div>
<svg class="a" style="left:104px;top:997px;" width="21" height="17" viewBox="0 0 21 17"><path d="M1 2 H8 Q10 2 10 4 V15 Q10 13 8 13 H1 Z M10 4 Q10 2 12 2 H19" fill="none" stroke="#555" stroke-width="1"/><path d="M12 8 L14.5 11 L19 4" fill="none" stroke="#555" stroke-width="1.2"/><path d="M19 9 V13 H12 Q10 13 10 15" fill="none" stroke="#555" stroke-width="1"/></svg>
<div class="t" style="left:143.5px;top:1002.00px;font-size:12.96px;line-height:12.96px;color:#444444;letter-spacing:-0.09px;">English (India)</div>
<svg class="a" style="left:245px;top:997px;" width="20" height="19" viewBox="0 0 20 19"><path d="M8.5 3.5 A6.5 6.5 0 1 0 4 14.5" fill="none" stroke="#555" stroke-width="1.3" stroke-dasharray="2.2 1.6"/><path d="M8.5 0.5 V8 M6 5.5 L8.5 8 L11 5.5" fill="none" stroke="#555" stroke-width="1.2"/><path d="M11 5 H16 M13.5 2.5 V7.5" stroke="#555" stroke-width="1.1"/><path d="M10 11 L16.5 17.5 M16.5 11 L10 17.5" stroke="#333" stroke-width="1.8"/></svg>
<div class="t" style="left:268px;top:1002.00px;font-size:12.96px;line-height:12.96px;color:#262626;letter-spacing:-0.07px;font-weight:bold;">Accessibility: Investigate</div>
<svg class="a" style="left:1287px;top:997px;" width="20" height="17" viewBox="0 0 20 17"><path d="M2 6 H18 M2 9 H18 M2 12 H18 M2 15 H12" stroke="#555" stroke-width="1"/><path d="M6 4.5 L10 0.5 L14 4.5 Z" fill="#555"/></svg>
<div class="t" style="left:1307.5px;top:1001.00px;font-size:13.59px;line-height:13.59px;color:#444444;">Notes</div>
<svg class="a" style="left:1367px;top:997px;" width="21" height="19" viewBox="0 0 21 19"><path d="M2.5 1 H18 Q20 1 20 3 V11 Q20 13 18 13 H9 L5 17.5 V13 H2.5 Q0.5 13 0.5 11 V3 Q0.5 1 2.5 1 Z" fill="#555"/></svg>
<div class="t" style="left:1389px;top:1002.00px;font-size:13.03px;line-height:13.03px;color:#444444;">Comments</div>
<div class="a" style="left:1475px;top:994px;width:50px;height:22px;background:#C8C8C8"></div>
<svg class="a" style="left:1490px;top:999px;" width="20" height="18" viewBox="0 0 20 18"><rect x="1" y="1" width="16" height="15" fill="none" stroke="#6E6E6E" stroke-width="1.2"/><rect x="5" y="3" width="10" height="7" fill="none" stroke="#6E6E6E" stroke-width="1.1"/><path d="M5 3 V16" stroke="#6E6E6E" stroke-width="1.1"/><path d="M5 12.5 H17" stroke="#6E6E6E" stroke-width="1"/></svg>
<svg class="a" style="left:1539px;top:998.5px;" width="20" height="18" viewBox="0 0 20 18"><rect x="1" y="1" width="6.5" height="5.5" fill="none" stroke="#6E6E6E" stroke-width="1.1"/><rect x="11" y="1" width="6.5" height="5.5" fill="none" stroke="#6E6E6E" stroke-width="1.1"/><rect x="1" y="10" width="6.5" height="5.5" fill="none" stroke="#6E6E6E" stroke-width="1.1"/><rect x="11" y="10" width="6.5" height="5.5" fill="none" stroke="#6E6E6E" stroke-width="1.1"/></svg>
<svg class="a" style="left:1589px;top:998.5px;" width="20" height="18" viewBox="0 0 20 18"><path d="M1 1.5 H8 Q9.5 1.5 9.5 3 V15.5 Q9.5 14 8 14 H1 Z M9.5 3 Q9.5 1.5 11 1.5 H18 V14 H11 Q9.5 14 9.5 15.5" fill="none" stroke="#6E6E6E" stroke-width="1.1"/><path d="M3 5 H7.5 M3 8 H7.5 M3 11 H7.5 M11.5 5 H16 M11.5 8 H16 M11.5 11 H16" stroke="#6E6E6E" stroke-width="0.9"/></svg>
<svg class="a" style="left:1640px;top:998.5px;" width="20" height="18" viewBox="0 0 20 18"><path d="M1 1.5 H19" stroke="#6E6E6E" stroke-width="1.6"/><path d="M2.5 2 V10 H17.5 V2" fill="none" stroke="#6E6E6E" stroke-width="1.1"/><path d="M10 10 V16 M6.5 16.5 H13.5" stroke="#6E6E6E" stroke-width="1.1"/></svg>
<div class="a" style="left:1682px;top:1006px;width:10px;height:1.3px;background:#444"></div>
<div class="a" style="left:1698px;top:1007px;width:125px;height:1.2px;background:#444"></div>
<div class="a" style="left:1746px;top:999px;width:7px;height:16px;background:#444"></div>
<div class="a" style="left:1760px;top:1003px;width:1px;height:9px;background:#444"></div>
<div class="a" style="left:1827px;top:1006px;width:11px;height:1.3px;background:#444"></div>
<div class="a" style="left:1832px;top:1001px;width:1.3px;height:11px;background:#444"></div>
<div class="t" style="left:1852.5px;top:1002.00px;font-size:13.24px;line-height:13.24px;color:#444444;">81%</div>
<svg class="a" style="left:1896px;top:998px;" width="16" height="17" viewBox="0 0 16 17"><rect x="0.5" y="0.5" width="14.5" height="15.5" fill="none" stroke="#6E6E6E" stroke-width="1"/><path d="M7.75 2.5 V5.5 M6 4 L7.75 2.5 L9.5 4 M7.75 14 V11 M6 12.5 L7.75 14 L9.5 12.5 M2 8.25 H5 M3.5 6.5 L2 8.25 L3.5 10 M13.5 8.25 H10.5 M12 6.5 L13.5 8.25 L12 10" fill="none" stroke="#6E6E6E" stroke-width="0.9"/></svg>
</body></html>
